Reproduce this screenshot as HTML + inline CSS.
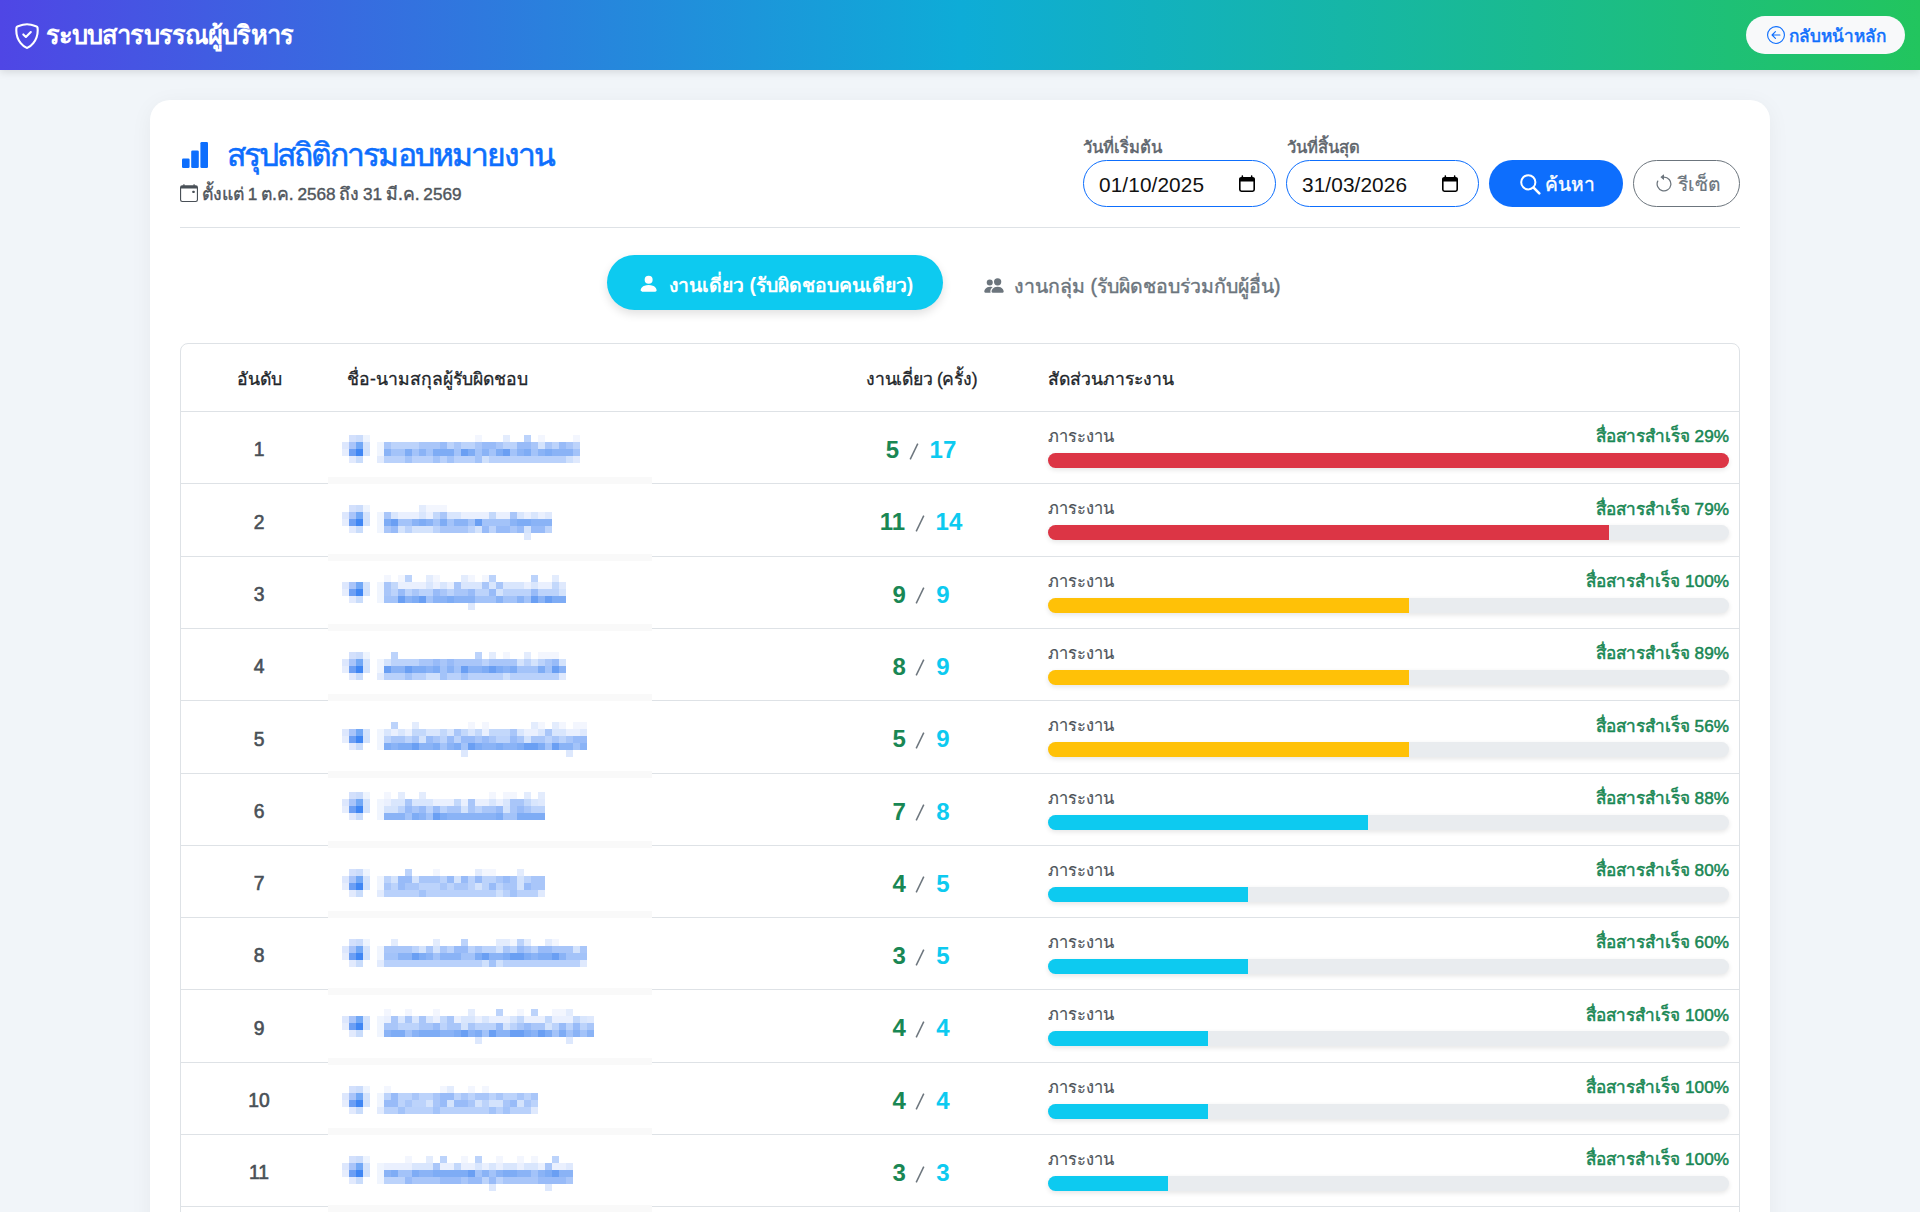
<!DOCTYPE html>
<html lang="th">
<head>
<meta charset="utf-8">
<title>สรุปสถิติการมอบหมายงาน</title>
<style>
*{box-sizing:border-box;margin:0;padding:0}
html,body{width:1920px;height:1212px;overflow:hidden}
body{background:#f1f5f9;font-family:"Liberation Sans",sans-serif;color:#212529;position:relative}
.abs{position:absolute;white-space:nowrap;line-height:1}
.hdr{position:absolute;left:0;top:0;width:1920px;height:70px;background:linear-gradient(90deg,#4f46e5 0%,#0eacd7 50%,#22c55e 100%);box-shadow:0 2px 8px rgba(0,0,0,.12);z-index:2}
.hdr .ttl{left:45.5px;top:23px;letter-spacing:-.85px;font-size:25.5px;font-weight:700;color:#fff}
.back{position:absolute;left:1746px;top:16px;width:159px;height:38px;border-radius:19px;background:#f8f9fa}
.back .t{left:43px;top:11.7px;font-size:17.2px;font-weight:400;color:#0d6efd;-webkit-text-stroke:.55px #0d6efd}
.card{position:absolute;left:150px;top:100px;width:1620px;height:1200px;background:#fff;border-radius:20px;box-shadow:0 4px 22px rgba(15,23,42,.05)}
.title{left:226.5px;top:140px;font-size:31.8px;font-weight:400;color:#0d6efd;letter-spacing:-1.9px;-webkit-text-stroke:0.6px #0d6efd}
.sub{left:202px;top:186px;font-size:17.6px;font-weight:400;color:#50565c;word-spacing:-1.2px;-webkit-text-stroke:.4px #50565c}
.sub .d{font-size:17.2px}
.lbl{top:140px;font-size:16.6px;font-weight:400;color:#5c636a;-webkit-text-stroke:.45px #5c636a}
.inp{position:absolute;top:160px;width:193px;height:47px;border:1px solid #0d6efd;border-radius:24px;background:#fff}
.inp .v{left:15px;top:14px;font-size:20.8px;color:#111;letter-spacing:.1px}
.btn-s{position:absolute;left:1489px;top:160px;width:134px;height:47px;border-radius:24px;background:#0d6efd}
.bs-t{left:1544.5px;top:175px;font-size:19.2px;font-weight:400;color:#fff;-webkit-text-stroke:.35px #fff}
.btn-r{position:absolute;left:1633px;top:160px;width:107px;height:47px;border-radius:24px;border:1px solid #6c757d;background:#fff}
.br-t{left:1678px;top:175px;font-size:19.2px;font-weight:400;color:#6c757d;-webkit-text-stroke:.2px #6c757d}
.sep{position:absolute;left:180px;top:227px;width:1560px;height:1px;background:#dee2e6}
.tab-a{position:absolute;left:607px;top:255px;width:336px;height:55px;border-radius:28px;background:#0dcaf0;box-shadow:0 4px 10px rgba(0,0,0,.12)}
.ta-t{left:669px;top:276px;font-size:19.4px;font-weight:700;color:#fff}
.ti-t{left:1014px;top:277.2px;font-size:19.5px;font-weight:400;color:#6c757d;-webkit-text-stroke:.4px #6c757d}
.tbl{position:absolute;left:180px;top:343px;width:1560px;height:1000px;border:1px solid #dee2e6;border-radius:8px;background:#fff}
.th{top:371px;font-size:17.6px;font-weight:400;color:#212529;-webkit-text-stroke:.3px #212529}
.hl{position:absolute;left:181px;width:1558px;height:1px;background:#dee2e6}
.rk{left:181px;width:156px;text-align:center;font-size:19.3px;font-weight:400;color:#495057;-webkit-text-stroke:.6px #495057}
.cnt{left:806px;width:230px;text-align:center;font-size:24px;font-weight:700}
.cnt .g{color:#198754}.cnt .c{color:#0dcaf0}
.cnt .sl{display:inline-block;margin:0 11px 0 9.5px;position:relative;top:1.5px;vertical-align:baseline}
.pl{left:1048px;font-size:16.4px;color:#4d5359;-webkit-text-stroke:.2px #4d5359}
.pr{right:191px;font-size:17.2px;font-weight:400;color:#198754;-webkit-text-stroke:.5px #198754}
.trk{position:absolute;left:1048px;width:681px;height:15px;border-radius:8px;background:#e9ecef;overflow:hidden;box-shadow:0 2px 5px rgba(0,0,0,.1)}
.fill{height:15px}
</style>
</head>
<body>
<div class="hdr"><svg class="abs" style="left:15px;top:23px" width="24" height="26" viewBox="0 0 24 26" fill="none" stroke="#fff" stroke-width="2.1" stroke-linejoin="round" stroke-linecap="round"><path d="M12 1.3C9 1.3 4.8 2.6 2.4 3.4 1.9 3.6 1.6 4 1.5 4.5 0.6 11.6 3 16.8 5.7 20.2c2 2.6 4.4 4.2 6.3 4.7 1.9-.5 4.3-2.1 6.3-4.7 2.7-3.4 5.1-8.6 4.2-15.7-.1-.5-.4-.9-.9-1.1C19.2 2.6 15 1.3 12 1.3z"/><path d="M8.3 11.4l2.6 2.6 4.9-4.9"/></svg><div class="abs ttl">ระบบสารบรรณผู้บริหาร</div><div class="back"><svg class="abs" style="left:21px;top:10px" width="18" height="18" viewBox="0 0 16 16" fill="#0d6efd"><path fill-rule="evenodd" d="M1 8a7 7 0 1 0 14 0A7 7 0 0 0 1 8m15 0A8 8 0 1 1 0 8a8 8 0 0 1 16 0m-4.5-.5a.5.5 0 0 1 0 1H5.707l2.147 2.146a.5.5 0 0 1-.708.708l-3-3a.5.5 0 0 1 0-.708l3-3a.5.5 0 1 1 .708.708L5.707 7.5z"/></svg><div class="abs t">กลับหน้าหลัก</div></div></div>
<div class="card"></div>
<svg class="abs" style="left:182px;top:142px" width="26" height="26" viewBox="0 0 26 26" fill="#0d6efd"><rect x="0" y="16.5" width="7.6" height="9.5" rx="1.3"/><rect x="9.2" y="8.5" width="7.6" height="17.5" rx="1.3"/><rect x="18.4" y="0" width="7.6" height="26" rx="1.3"/></svg>
<div class="abs title">สรุปสถิติการมอบหมายงาน</div>
<svg class="abs" style="left:180px;top:184px" width="18" height="18" viewBox="0 0 16 16" fill="#495057"><path d="M11 6.5a.5.5 0 0 1 .5-.5h1a.5.5 0 0 1 .5.5v1a.5.5 0 0 1-.5.5h-1a.5.5 0 0 1-.5-.5z"/><path d="M3.5 0a.5.5 0 0 1 .5.5V1h8V.5a.5.5 0 0 1 1 0V1h1a2 2 0 0 1 2 2v11a2 2 0 0 1-2 2H2a2 2 0 0 1-2-2V3a2 2 0 0 1 2-2h1V.5a.5.5 0 0 1 .5-.5M1 4v10a1 1 0 0 0 1 1h12a1 1 0 0 0 1-1V4z"/></svg>
<div class="abs sub">ตั้งแต่ <span class="d">1</span> ต.ค. <span class="d">2568</span> ถึง <span class="d">31</span> มี.ค. <span class="d">2569</span></div>
<div class="abs lbl" style="left:1083px">วันที่เริ่มต้น</div>
<div class="abs lbl" style="left:1287px">วันที่สิ้นสุด</div>
<div class="inp" style="left:1083px"><div class="abs v">01/10/2025</div></div><svg class="abs" style="left:1239px;top:174.5px" width="16" height="18" viewBox="0 0 16 18"><rect x="0.8" y="2.9" width="14.4" height="13.3" rx="1.6" fill="none" stroke="#000" stroke-width="1.6"/><path d="M0 4.6a1.8 1.8 0 0 1 1.8-1.8h12.4a1.8 1.8 0 0 1 1.8 1.8V6.4H0z" fill="#000"/><rect x="2.6" y="0.3" width="1.5" height="3" rx=".6" fill="#000"/><rect x="11.9" y="0.3" width="1.5" height="3" rx=".6" fill="#000"/></svg>
<div class="inp" style="left:1286px"><div class="abs v">31/03/2026</div></div><svg class="abs" style="left:1442px;top:174.5px" width="16" height="18" viewBox="0 0 16 18"><rect x="0.8" y="2.9" width="14.4" height="13.3" rx="1.6" fill="none" stroke="#000" stroke-width="1.6"/><path d="M0 4.6a1.8 1.8 0 0 1 1.8-1.8h12.4a1.8 1.8 0 0 1 1.8 1.8V6.4H0z" fill="#000"/><rect x="2.6" y="0.3" width="1.5" height="3" rx=".6" fill="#000"/><rect x="11.9" y="0.3" width="1.5" height="3" rx=".6" fill="#000"/></svg>
<div class="btn-s"></div><svg class="abs" style="left:1519.5px;top:174px" width="21" height="21" viewBox="0 0 21 21" fill="none" stroke="#fff"><circle cx="8.3" cy="8.3" r="7.1" stroke-width="2"/><path d="M13.6 13.6L19.3 19.3" stroke-width="2.6" stroke-linecap="round"/></svg><div class="abs bs-t">ค้นหา</div>
<div class="btn-r"></div><svg class="abs" style="left:1653.6px;top:174px" width="20" height="20" viewBox="0 0 16 16" fill="#6c757d"><path fill-rule="evenodd" d="M8 3a5 5 0 1 1-4.546 2.914.5.5 0 0 0-.908-.417A6 6 0 1 0 8 2z"/><path d="M8 4.466V.534a.25.25 0 0 0-.41-.192L5.23 2.308a.25.25 0 0 0 0 .384l2.36 1.966A.25.25 0 0 0 8 4.466"/></svg><div class="abs br-t">รีเซ็ต</div>
<div class="sep"></div>
<div class="tab-a"></div><svg class="abs" style="left:638.3px;top:273.3px" width="21.3" height="21.3" viewBox="0 0 16 16" fill="#fff"><path d="M3 14s-1 0-1-1 1-4 6-4 6 3 6 4-1 1-1 1zm5-6a3 3 0 1 0 0-6 3 3 0 0 0 0 6"/></svg><div class="abs ta-t">งานเดี่ยว (รับผิดชอบคนเดียว)</div>
<svg class="abs" style="left:984px;top:277px" width="20" height="17" viewBox="0 0 16 14" fill="#6c757d"><path d="M7 13s-1 0-1-1 1-4 5-4 5 3 5 4-1 1-1 1zm4-6a3 3 0 1 0 0-6 3 3 0 0 0 0 6m-5.784 6A2.24 2.24 0 0 1 5 12c0-1.355.68-2.75 1.936-3.72A6.3 6.3 0 0 0 5 8c-4 0-5 3-5 4s1 1 1 1zM4.5 7a2.5 2.5 0 1 0 0-5 2.5 2.5 0 0 0 0 5"/></svg><div class="abs ti-t">งานกลุ่ม (รับผิดชอบร่วมกับผู้อื่น)</div>
<div class="tbl"></div>
<div class="abs th" style="left:237px">อันดับ</div>
<div class="abs th" style="left:347px">ชื่อ-นามสกุลผู้รับผิดชอบ</div>
<div class="abs th" style="left:866px;letter-spacing:-.25px">งานเดี่ยว (ครั้ง)</div>
<div class="abs th" style="left:1048px">สัดส่วนภาระงาน</div>
<div class="hl" style="top:411px"></div>
<div class="hl" style="top:483.3px"></div>
<div class="abs rk" style="top:440.3px">1</div>
<div class="abs cnt" style="top:438px"><span class="g">5</span><svg class="sl" width="10" height="17" viewBox="0 0 10 17"><path d="M1.2 16.3L8.8 0.7" stroke="#6c757d" stroke-width="1.5"/></svg><span class="c">17</span></div>
<div class="abs pl" style="top:428px">ภาระงาน</div>
<div class="abs pr" style="top:428.3px">สื่อสารสำเร็จ <span class="d">29%</span></div>
<div class="trk" style="top:453px"><div class="fill" style="width:681px;background:#dc3545"></div></div>
<div class="hl" style="top:555.6px"></div>
<div class="abs rk" style="top:512.6px">2</div>
<div class="abs cnt" style="top:510.3px"><span class="g">11</span><svg class="sl" width="10" height="17" viewBox="0 0 10 17"><path d="M1.2 16.3L8.8 0.7" stroke="#6c757d" stroke-width="1.5"/></svg><span class="c">14</span></div>
<div class="abs pl" style="top:500.3px">ภาระงาน</div>
<div class="abs pr" style="top:500.6px">สื่อสารสำเร็จ <span class="d">79%</span></div>
<div class="trk" style="top:525.3px"><div class="fill" style="width:560.82px;background:#dc3545"></div></div>
<div class="hl" style="top:627.9px"></div>
<div class="abs rk" style="top:584.9px">3</div>
<div class="abs cnt" style="top:582.6px"><span class="g">9</span><svg class="sl" width="10" height="17" viewBox="0 0 10 17"><path d="M1.2 16.3L8.8 0.7" stroke="#6c757d" stroke-width="1.5"/></svg><span class="c">9</span></div>
<div class="abs pl" style="top:572.6px">ภาระงาน</div>
<div class="abs pr" style="top:572.9px">สื่อสารสำเร็จ <span class="d">100%</span></div>
<div class="trk" style="top:597.6px"><div class="fill" style="width:360.53px;background:#ffc107"></div></div>
<div class="hl" style="top:700.2px"></div>
<div class="abs rk" style="top:657.2px">4</div>
<div class="abs cnt" style="top:654.9px"><span class="g">8</span><svg class="sl" width="10" height="17" viewBox="0 0 10 17"><path d="M1.2 16.3L8.8 0.7" stroke="#6c757d" stroke-width="1.5"/></svg><span class="c">9</span></div>
<div class="abs pl" style="top:644.9px">ภาระงาน</div>
<div class="abs pr" style="top:645.2px">สื่อสารสำเร็จ <span class="d">89%</span></div>
<div class="trk" style="top:669.9px"><div class="fill" style="width:360.53px;background:#ffc107"></div></div>
<div class="hl" style="top:772.5px"></div>
<div class="abs rk" style="top:729.5px">5</div>
<div class="abs cnt" style="top:727.2px"><span class="g">5</span><svg class="sl" width="10" height="17" viewBox="0 0 10 17"><path d="M1.2 16.3L8.8 0.7" stroke="#6c757d" stroke-width="1.5"/></svg><span class="c">9</span></div>
<div class="abs pl" style="top:717.2px">ภาระงาน</div>
<div class="abs pr" style="top:717.5px">สื่อสารสำเร็จ <span class="d">56%</span></div>
<div class="trk" style="top:742.2px"><div class="fill" style="width:360.53px;background:#ffc107"></div></div>
<div class="hl" style="top:844.8px"></div>
<div class="abs rk" style="top:801.8px">6</div>
<div class="abs cnt" style="top:799.5px"><span class="g">7</span><svg class="sl" width="10" height="17" viewBox="0 0 10 17"><path d="M1.2 16.3L8.8 0.7" stroke="#6c757d" stroke-width="1.5"/></svg><span class="c">8</span></div>
<div class="abs pl" style="top:789.5px">ภาระงาน</div>
<div class="abs pr" style="top:789.8px">สื่อสารสำเร็จ <span class="d">88%</span></div>
<div class="trk" style="top:814.5px"><div class="fill" style="width:320.47px;background:#0dcaf0"></div></div>
<div class="hl" style="top:917.1px"></div>
<div class="abs rk" style="top:874.1px">7</div>
<div class="abs cnt" style="top:871.8px"><span class="g">4</span><svg class="sl" width="10" height="17" viewBox="0 0 10 17"><path d="M1.2 16.3L8.8 0.7" stroke="#6c757d" stroke-width="1.5"/></svg><span class="c">5</span></div>
<div class="abs pl" style="top:861.8px">ภาระงาน</div>
<div class="abs pr" style="top:862.1px">สื่อสารสำเร็จ <span class="d">80%</span></div>
<div class="trk" style="top:886.8px"><div class="fill" style="width:200.29px;background:#0dcaf0"></div></div>
<div class="hl" style="top:989.4px"></div>
<div class="abs rk" style="top:946.4px">8</div>
<div class="abs cnt" style="top:944.1px"><span class="g">3</span><svg class="sl" width="10" height="17" viewBox="0 0 10 17"><path d="M1.2 16.3L8.8 0.7" stroke="#6c757d" stroke-width="1.5"/></svg><span class="c">5</span></div>
<div class="abs pl" style="top:934.1px">ภาระงาน</div>
<div class="abs pr" style="top:934.4px">สื่อสารสำเร็จ <span class="d">60%</span></div>
<div class="trk" style="top:959.1px"><div class="fill" style="width:200.29px;background:#0dcaf0"></div></div>
<div class="hl" style="top:1061.7px"></div>
<div class="abs rk" style="top:1018.7px">9</div>
<div class="abs cnt" style="top:1016.4px"><span class="g">4</span><svg class="sl" width="10" height="17" viewBox="0 0 10 17"><path d="M1.2 16.3L8.8 0.7" stroke="#6c757d" stroke-width="1.5"/></svg><span class="c">4</span></div>
<div class="abs pl" style="top:1006.4px">ภาระงาน</div>
<div class="abs pr" style="top:1006.7px">สื่อสารสำเร็จ <span class="d">100%</span></div>
<div class="trk" style="top:1031.4px"><div class="fill" style="width:160.24px;background:#0dcaf0"></div></div>
<div class="hl" style="top:1134px"></div>
<div class="abs rk" style="top:1091px">10</div>
<div class="abs cnt" style="top:1088.7px"><span class="g">4</span><svg class="sl" width="10" height="17" viewBox="0 0 10 17"><path d="M1.2 16.3L8.8 0.7" stroke="#6c757d" stroke-width="1.5"/></svg><span class="c">4</span></div>
<div class="abs pl" style="top:1078.7px">ภาระงาน</div>
<div class="abs pr" style="top:1079px">สื่อสารสำเร็จ <span class="d">100%</span></div>
<div class="trk" style="top:1103.7px"><div class="fill" style="width:160.24px;background:#0dcaf0"></div></div>
<div class="hl" style="top:1206.3px"></div>
<div class="abs rk" style="top:1163.3px">11</div>
<div class="abs cnt" style="top:1161px"><span class="g">3</span><svg class="sl" width="10" height="17" viewBox="0 0 10 17"><path d="M1.2 16.3L8.8 0.7" stroke="#6c757d" stroke-width="1.5"/></svg><span class="c">3</span></div>
<div class="abs pl" style="top:1151px">ภาระงาน</div>
<div class="abs pr" style="top:1151.3px">สื่อสารสำเร็จ <span class="d">100%</span></div>
<div class="trk" style="top:1176px"><div class="fill" style="width:120.18px;background:#0dcaf0"></div></div>
<div class="hl" style="top:1278.6px"></div>
<div class="abs rk" style="top:1235.6px">12</div>
<div class="abs cnt" style="top:1233.3px"><span class="g">3</span><svg class="sl" width="10" height="17" viewBox="0 0 10 17"><path d="M1.2 16.3L8.8 0.7" stroke="#6c757d" stroke-width="1.5"/></svg><span class="c">3</span></div>
<div class="abs pl" style="top:1223.3px">ภาระงาน</div>
<div class="abs pr" style="top:1223.6px">สื่อสารสำเร็จ <span class="d">100%</span></div>
<div class="trk" style="top:1248.3px"><div class="fill" style="width:120.18px;background:#0dcaf0"></div></div>
<svg class="abs" style="left:0;top:0" width="1920" height="1212"><rect x="328" y="477" width="324" height="7" fill="#f9f9f9"/><rect x="349" y="435" width="7" height="7" fill="#d3e0fc"/><rect x="356" y="435" width="7" height="7" fill="#cbdcfb"/><rect x="363" y="435" width="7" height="7" fill="#eef4fe"/><rect x="342" y="442" width="7" height="7" fill="#dde7fd"/><rect x="349" y="442" width="7" height="7" fill="#a9c4f9"/><rect x="356" y="442" width="7" height="7" fill="#72a8f6"/><rect x="363" y="442" width="7" height="7" fill="#d4e3fc"/><rect x="342" y="449" width="7" height="7" fill="#e6edfd"/><rect x="349" y="449" width="7" height="7" fill="#6d9ff4"/><rect x="356" y="449" width="7" height="7" fill="#3f86f4"/><rect x="363" y="449" width="7" height="7" fill="#d2e2fc"/><rect x="349" y="456" width="7" height="7" fill="#e2eafd"/><rect x="356" y="456" width="7" height="7" fill="#c9dcfb"/><rect x="475" y="435" width="7" height="7" fill="#f3f6fe"/><rect x="503" y="435" width="7" height="7" fill="#e3ecfd"/><rect x="524" y="435" width="7" height="7" fill="#bcd3fb"/><rect x="538" y="435" width="7" height="7" fill="#f3f6fe"/><rect x="573" y="435" width="7" height="7" fill="#f3f6fe"/><rect x="377" y="442" width="7" height="7" fill="#f0f5fe"/><rect x="384" y="442" width="7" height="7" fill="#a9c6f9"/><rect x="391" y="442" width="7" height="7" fill="#bcd3fb"/><rect x="398" y="442" width="7" height="7" fill="#bcd3fb"/><rect x="405" y="442" width="7" height="7" fill="#bcd3fb"/><rect x="412" y="442" width="7" height="7" fill="#bcd3fb"/><rect x="419" y="442" width="7" height="7" fill="#a9c6f9"/><rect x="426" y="442" width="7" height="7" fill="#a9c6f9"/><rect x="433" y="442" width="7" height="7" fill="#a9c6f9"/><rect x="440" y="442" width="7" height="7" fill="#98bbf8"/><rect x="447" y="442" width="7" height="7" fill="#bcd3fb"/><rect x="454" y="442" width="7" height="7" fill="#a9c6f9"/><rect x="461" y="442" width="7" height="7" fill="#bcd3fb"/><rect x="468" y="442" width="7" height="7" fill="#bcd3fb"/><rect x="475" y="442" width="7" height="7" fill="#a9c6f9"/><rect x="482" y="442" width="7" height="7" fill="#98bbf8"/><rect x="489" y="442" width="7" height="7" fill="#98bbf8"/><rect x="496" y="442" width="7" height="7" fill="#a9c6f9"/><rect x="503" y="442" width="7" height="7" fill="#bcd3fb"/><rect x="510" y="442" width="7" height="7" fill="#bcd3fb"/><rect x="517" y="442" width="7" height="7" fill="#98bbf8"/><rect x="524" y="442" width="7" height="7" fill="#98bbf8"/><rect x="531" y="442" width="7" height="7" fill="#a9c6f9"/><rect x="538" y="442" width="7" height="7" fill="#d4e3fc"/><rect x="545" y="442" width="7" height="7" fill="#a9c6f9"/><rect x="552" y="442" width="7" height="7" fill="#bcd3fb"/><rect x="559" y="442" width="7" height="7" fill="#98bbf8"/><rect x="566" y="442" width="7" height="7" fill="#a9c6f9"/><rect x="573" y="442" width="7" height="7" fill="#bcd3fb"/><rect x="377" y="449" width="7" height="7" fill="#f0f5fe"/><rect x="384" y="449" width="7" height="7" fill="#8ab3f6"/><rect x="391" y="449" width="7" height="7" fill="#a3c3f9"/><rect x="398" y="449" width="7" height="7" fill="#a3c3f9"/><rect x="405" y="449" width="7" height="7" fill="#7eacf5"/><rect x="412" y="449" width="7" height="7" fill="#a3c3f9"/><rect x="419" y="449" width="7" height="7" fill="#8ab3f6"/><rect x="426" y="449" width="7" height="7" fill="#a3c3f9"/><rect x="433" y="449" width="7" height="7" fill="#7eacf5"/><rect x="440" y="449" width="7" height="7" fill="#7eacf5"/><rect x="447" y="449" width="7" height="7" fill="#7eacf5"/><rect x="454" y="449" width="7" height="7" fill="#a3c3f9"/><rect x="461" y="449" width="7" height="7" fill="#6a9ff3"/><rect x="468" y="449" width="7" height="7" fill="#7eacf5"/><rect x="475" y="449" width="7" height="7" fill="#a3c3f9"/><rect x="482" y="449" width="7" height="7" fill="#8ab3f6"/><rect x="489" y="449" width="7" height="7" fill="#a3c3f9"/><rect x="496" y="449" width="7" height="7" fill="#7eacf5"/><rect x="503" y="449" width="7" height="7" fill="#6a9ff3"/><rect x="510" y="449" width="7" height="7" fill="#a3c3f9"/><rect x="517" y="449" width="7" height="7" fill="#8ab3f6"/><rect x="524" y="449" width="7" height="7" fill="#7eacf5"/><rect x="531" y="449" width="7" height="7" fill="#a3c3f9"/><rect x="538" y="449" width="7" height="7" fill="#8ab3f6"/><rect x="545" y="449" width="7" height="7" fill="#7eacf5"/><rect x="552" y="449" width="7" height="7" fill="#8ab3f6"/><rect x="559" y="449" width="7" height="7" fill="#8ab3f6"/><rect x="566" y="449" width="7" height="7" fill="#8ab3f6"/><rect x="573" y="449" width="7" height="7" fill="#a3c3f9"/><rect x="377" y="456" width="7" height="7" fill="#e2ebfd"/><rect x="384" y="456" width="7" height="7" fill="#b9d1fb"/><rect x="391" y="456" width="7" height="7" fill="#b9d1fb"/><rect x="398" y="456" width="7" height="7" fill="#b9d1fb"/><rect x="405" y="456" width="7" height="7" fill="#a3c3f9"/><rect x="412" y="456" width="7" height="7" fill="#b9d1fb"/><rect x="419" y="456" width="7" height="7" fill="#b9d1fb"/><rect x="426" y="456" width="7" height="7" fill="#b9d1fb"/><rect x="433" y="456" width="7" height="7" fill="#a3c3f9"/><rect x="440" y="456" width="7" height="7" fill="#b9d1fb"/><rect x="447" y="456" width="7" height="7" fill="#a3c3f9"/><rect x="454" y="456" width="7" height="7" fill="#b9d1fb"/><rect x="461" y="456" width="7" height="7" fill="#b9d1fb"/><rect x="468" y="456" width="7" height="7" fill="#b9d1fb"/><rect x="475" y="456" width="7" height="7" fill="#a3c3f9"/><rect x="482" y="456" width="7" height="7" fill="#cfe0fc"/><rect x="489" y="456" width="7" height="7" fill="#b9d1fb"/><rect x="496" y="456" width="7" height="7" fill="#b9d1fb"/><rect x="503" y="456" width="7" height="7" fill="#b9d1fb"/><rect x="510" y="456" width="7" height="7" fill="#b9d1fb"/><rect x="517" y="456" width="7" height="7" fill="#b9d1fb"/><rect x="524" y="456" width="7" height="7" fill="#b9d1fb"/><rect x="531" y="456" width="7" height="7" fill="#b9d1fb"/><rect x="538" y="456" width="7" height="7" fill="#b9d1fb"/><rect x="545" y="456" width="7" height="7" fill="#b9d1fb"/><rect x="552" y="456" width="7" height="7" fill="#b9d1fb"/><rect x="559" y="456" width="7" height="7" fill="#b9d1fb"/><rect x="566" y="456" width="7" height="7" fill="#cfe0fc"/><rect x="573" y="456" width="7" height="7" fill="#dfe9fd"/><rect x="328" y="554" width="324" height="7" fill="#f9f9f9"/><rect x="349" y="505" width="7" height="7" fill="#d3e0fc"/><rect x="356" y="505" width="7" height="7" fill="#cbdcfb"/><rect x="363" y="505" width="7" height="7" fill="#eef4fe"/><rect x="342" y="512" width="7" height="7" fill="#dde7fd"/><rect x="349" y="512" width="7" height="7" fill="#a9c4f9"/><rect x="356" y="512" width="7" height="7" fill="#72a8f6"/><rect x="363" y="512" width="7" height="7" fill="#d4e3fc"/><rect x="342" y="519" width="7" height="7" fill="#e6edfd"/><rect x="349" y="519" width="7" height="7" fill="#6d9ff4"/><rect x="356" y="519" width="7" height="7" fill="#3f86f4"/><rect x="363" y="519" width="7" height="7" fill="#d2e2fc"/><rect x="349" y="526" width="7" height="7" fill="#e2eafd"/><rect x="356" y="526" width="7" height="7" fill="#c9dcfb"/><rect x="419" y="505" width="7" height="7" fill="#e3ecfd"/><rect x="426" y="505" width="7" height="7" fill="#f3f6fe"/><rect x="433" y="505" width="7" height="7" fill="#f3f6fe"/><rect x="440" y="505" width="7" height="7" fill="#f3f6fe"/><rect x="377" y="512" width="7" height="7" fill="#f0f5fe"/><rect x="384" y="512" width="7" height="7" fill="#a9c6f9"/><rect x="391" y="512" width="7" height="7" fill="#d9e6fd"/><rect x="398" y="512" width="7" height="7" fill="#eaf0fe"/><rect x="405" y="512" width="7" height="7" fill="#eaf0fe"/><rect x="412" y="512" width="7" height="7" fill="#eaf0fe"/><rect x="419" y="512" width="7" height="7" fill="#d9e6fd"/><rect x="426" y="512" width="7" height="7" fill="#eaf0fe"/><rect x="433" y="512" width="7" height="7" fill="#c3d8fb"/><rect x="440" y="512" width="7" height="7" fill="#a9c6f9"/><rect x="447" y="512" width="7" height="7" fill="#d9e6fd"/><rect x="454" y="512" width="7" height="7" fill="#d9e6fd"/><rect x="461" y="512" width="7" height="7" fill="#eaf0fe"/><rect x="468" y="512" width="7" height="7" fill="#eaf0fe"/><rect x="475" y="512" width="7" height="7" fill="#eaf0fe"/><rect x="482" y="512" width="7" height="7" fill="#eaf0fe"/><rect x="489" y="512" width="7" height="7" fill="#c3d8fb"/><rect x="496" y="512" width="7" height="7" fill="#eaf0fe"/><rect x="503" y="512" width="7" height="7" fill="#eaf0fe"/><rect x="510" y="512" width="7" height="7" fill="#a9c6f9"/><rect x="517" y="512" width="7" height="7" fill="#d9e6fd"/><rect x="524" y="512" width="7" height="7" fill="#eaf0fe"/><rect x="531" y="512" width="7" height="7" fill="#d9e6fd"/><rect x="538" y="512" width="7" height="7" fill="#eaf0fe"/><rect x="545" y="512" width="7" height="7" fill="#dfe9fd"/><rect x="377" y="519" width="7" height="7" fill="#f0f5fe"/><rect x="384" y="519" width="7" height="7" fill="#7eacf5"/><rect x="391" y="519" width="7" height="7" fill="#6a9ff3"/><rect x="398" y="519" width="7" height="7" fill="#a3c3f9"/><rect x="405" y="519" width="7" height="7" fill="#a3c3f9"/><rect x="412" y="519" width="7" height="7" fill="#8ab3f6"/><rect x="419" y="519" width="7" height="7" fill="#7eacf5"/><rect x="426" y="519" width="7" height="7" fill="#8ab3f6"/><rect x="433" y="519" width="7" height="7" fill="#a3c3f9"/><rect x="440" y="519" width="7" height="7" fill="#7eacf5"/><rect x="447" y="519" width="7" height="7" fill="#a3c3f9"/><rect x="454" y="519" width="7" height="7" fill="#8ab3f6"/><rect x="461" y="519" width="7" height="7" fill="#8ab3f6"/><rect x="468" y="519" width="7" height="7" fill="#a3c3f9"/><rect x="475" y="519" width="7" height="7" fill="#6a9ff3"/><rect x="482" y="519" width="7" height="7" fill="#a3c3f9"/><rect x="489" y="519" width="7" height="7" fill="#a3c3f9"/><rect x="496" y="519" width="7" height="7" fill="#a3c3f9"/><rect x="503" y="519" width="7" height="7" fill="#a3c3f9"/><rect x="510" y="519" width="7" height="7" fill="#8ab3f6"/><rect x="517" y="519" width="7" height="7" fill="#7eacf5"/><rect x="524" y="519" width="7" height="7" fill="#7eacf5"/><rect x="531" y="519" width="7" height="7" fill="#8ab3f6"/><rect x="538" y="519" width="7" height="7" fill="#8ab3f6"/><rect x="545" y="519" width="7" height="7" fill="#8ab3f6"/><rect x="377" y="526" width="7" height="7" fill="#f0f5fe"/><rect x="384" y="526" width="7" height="7" fill="#a9c6f9"/><rect x="391" y="526" width="7" height="7" fill="#98bbf8"/><rect x="398" y="526" width="7" height="7" fill="#d4e3fc"/><rect x="405" y="526" width="7" height="7" fill="#bcd3fb"/><rect x="412" y="526" width="7" height="7" fill="#d4e3fc"/><rect x="419" y="526" width="7" height="7" fill="#d4e3fc"/><rect x="426" y="526" width="7" height="7" fill="#d4e3fc"/><rect x="433" y="526" width="7" height="7" fill="#bcd3fb"/><rect x="440" y="526" width="7" height="7" fill="#a9c6f9"/><rect x="447" y="526" width="7" height="7" fill="#a9c6f9"/><rect x="454" y="526" width="7" height="7" fill="#a9c6f9"/><rect x="461" y="526" width="7" height="7" fill="#a9c6f9"/><rect x="468" y="526" width="7" height="7" fill="#bcd3fb"/><rect x="475" y="526" width="7" height="7" fill="#d4e3fc"/><rect x="482" y="526" width="7" height="7" fill="#98bbf8"/><rect x="489" y="526" width="7" height="7" fill="#bcd3fb"/><rect x="496" y="526" width="7" height="7" fill="#98bbf8"/><rect x="503" y="526" width="7" height="7" fill="#98bbf8"/><rect x="510" y="526" width="7" height="7" fill="#a9c6f9"/><rect x="517" y="526" width="7" height="7" fill="#98bbf8"/><rect x="524" y="526" width="7" height="7" fill="#d4e3fc"/><rect x="531" y="526" width="7" height="7" fill="#98bbf8"/><rect x="538" y="526" width="7" height="7" fill="#98bbf8"/><rect x="545" y="526" width="7" height="7" fill="#bcd3fb"/><rect x="524" y="533" width="7" height="7" fill="#dde8fd"/><rect x="328" y="624" width="324" height="7" fill="#f9f9f9"/><rect x="342" y="582" width="7" height="7" fill="#dde7fd"/><rect x="349" y="582" width="7" height="7" fill="#a9c4f9"/><rect x="356" y="582" width="7" height="7" fill="#72a8f6"/><rect x="363" y="582" width="7" height="7" fill="#d4e3fc"/><rect x="342" y="589" width="7" height="7" fill="#e6edfd"/><rect x="349" y="589" width="7" height="7" fill="#6d9ff4"/><rect x="356" y="589" width="7" height="7" fill="#3f86f4"/><rect x="363" y="589" width="7" height="7" fill="#d2e2fc"/><rect x="349" y="596" width="7" height="7" fill="#e2eafd"/><rect x="356" y="596" width="7" height="7" fill="#c9dcfb"/><rect x="384" y="575" width="7" height="7" fill="#f3f6fe"/><rect x="398" y="575" width="7" height="7" fill="#f3f6fe"/><rect x="405" y="575" width="7" height="7" fill="#bcd3fb"/><rect x="426" y="575" width="7" height="7" fill="#e3ecfd"/><rect x="433" y="575" width="7" height="7" fill="#f3f6fe"/><rect x="461" y="575" width="7" height="7" fill="#e3ecfd"/><rect x="468" y="575" width="7" height="7" fill="#f3f6fe"/><rect x="482" y="575" width="7" height="7" fill="#f3f6fe"/><rect x="489" y="575" width="7" height="7" fill="#bcd3fb"/><rect x="531" y="575" width="7" height="7" fill="#bcd3fb"/><rect x="552" y="575" width="7" height="7" fill="#e3ecfd"/><rect x="377" y="582" width="7" height="7" fill="#f0f5fe"/><rect x="384" y="582" width="7" height="7" fill="#a9c6f9"/><rect x="391" y="582" width="7" height="7" fill="#c3d8fb"/><rect x="398" y="582" width="7" height="7" fill="#eaf0fe"/><rect x="405" y="582" width="7" height="7" fill="#eaf0fe"/><rect x="412" y="582" width="7" height="7" fill="#eaf0fe"/><rect x="419" y="582" width="7" height="7" fill="#eaf0fe"/><rect x="426" y="582" width="7" height="7" fill="#d9e6fd"/><rect x="433" y="582" width="7" height="7" fill="#eaf0fe"/><rect x="440" y="582" width="7" height="7" fill="#d9e6fd"/><rect x="447" y="582" width="7" height="7" fill="#eaf0fe"/><rect x="454" y="582" width="7" height="7" fill="#a9c6f9"/><rect x="461" y="582" width="7" height="7" fill="#d9e6fd"/><rect x="468" y="582" width="7" height="7" fill="#d9e6fd"/><rect x="475" y="582" width="7" height="7" fill="#d9e6fd"/><rect x="482" y="582" width="7" height="7" fill="#a9c6f9"/><rect x="489" y="582" width="7" height="7" fill="#d9e6fd"/><rect x="496" y="582" width="7" height="7" fill="#a9c6f9"/><rect x="503" y="582" width="7" height="7" fill="#d9e6fd"/><rect x="510" y="582" width="7" height="7" fill="#d9e6fd"/><rect x="517" y="582" width="7" height="7" fill="#d9e6fd"/><rect x="524" y="582" width="7" height="7" fill="#eaf0fe"/><rect x="531" y="582" width="7" height="7" fill="#d9e6fd"/><rect x="538" y="582" width="7" height="7" fill="#eaf0fe"/><rect x="545" y="582" width="7" height="7" fill="#eaf0fe"/><rect x="552" y="582" width="7" height="7" fill="#c3d8fb"/><rect x="559" y="582" width="7" height="7" fill="#dfe9fd"/><rect x="377" y="589" width="7" height="7" fill="#f0f5fe"/><rect x="384" y="589" width="7" height="7" fill="#a9c6f9"/><rect x="391" y="589" width="7" height="7" fill="#bcd3fb"/><rect x="398" y="589" width="7" height="7" fill="#98bbf8"/><rect x="405" y="589" width="7" height="7" fill="#bcd3fb"/><rect x="412" y="589" width="7" height="7" fill="#a9c6f9"/><rect x="419" y="589" width="7" height="7" fill="#bcd3fb"/><rect x="426" y="589" width="7" height="7" fill="#bcd3fb"/><rect x="433" y="589" width="7" height="7" fill="#98bbf8"/><rect x="440" y="589" width="7" height="7" fill="#a9c6f9"/><rect x="447" y="589" width="7" height="7" fill="#bcd3fb"/><rect x="454" y="589" width="7" height="7" fill="#a9c6f9"/><rect x="461" y="589" width="7" height="7" fill="#a9c6f9"/><rect x="468" y="589" width="7" height="7" fill="#98bbf8"/><rect x="475" y="589" width="7" height="7" fill="#bcd3fb"/><rect x="482" y="589" width="7" height="7" fill="#bcd3fb"/><rect x="489" y="589" width="7" height="7" fill="#98bbf8"/><rect x="496" y="589" width="7" height="7" fill="#d4e3fc"/><rect x="503" y="589" width="7" height="7" fill="#bcd3fb"/><rect x="510" y="589" width="7" height="7" fill="#bcd3fb"/><rect x="517" y="589" width="7" height="7" fill="#bcd3fb"/><rect x="524" y="589" width="7" height="7" fill="#bcd3fb"/><rect x="531" y="589" width="7" height="7" fill="#98bbf8"/><rect x="538" y="589" width="7" height="7" fill="#bcd3fb"/><rect x="545" y="589" width="7" height="7" fill="#bcd3fb"/><rect x="552" y="589" width="7" height="7" fill="#bcd3fb"/><rect x="559" y="589" width="7" height="7" fill="#d4e3fc"/><rect x="377" y="596" width="7" height="7" fill="#f0f5fe"/><rect x="384" y="596" width="7" height="7" fill="#a3c3f9"/><rect x="391" y="596" width="7" height="7" fill="#a3c3f9"/><rect x="398" y="596" width="7" height="7" fill="#6a9ff3"/><rect x="405" y="596" width="7" height="7" fill="#8ab3f6"/><rect x="412" y="596" width="7" height="7" fill="#7eacf5"/><rect x="419" y="596" width="7" height="7" fill="#6a9ff3"/><rect x="426" y="596" width="7" height="7" fill="#a3c3f9"/><rect x="433" y="596" width="7" height="7" fill="#8ab3f6"/><rect x="440" y="596" width="7" height="7" fill="#8ab3f6"/><rect x="447" y="596" width="7" height="7" fill="#7eacf5"/><rect x="454" y="596" width="7" height="7" fill="#8ab3f6"/><rect x="461" y="596" width="7" height="7" fill="#8ab3f6"/><rect x="468" y="596" width="7" height="7" fill="#8ab3f6"/><rect x="475" y="596" width="7" height="7" fill="#a3c3f9"/><rect x="482" y="596" width="7" height="7" fill="#a3c3f9"/><rect x="489" y="596" width="7" height="7" fill="#a3c3f9"/><rect x="496" y="596" width="7" height="7" fill="#8ab3f6"/><rect x="503" y="596" width="7" height="7" fill="#a3c3f9"/><rect x="510" y="596" width="7" height="7" fill="#a3c3f9"/><rect x="517" y="596" width="7" height="7" fill="#8ab3f6"/><rect x="524" y="596" width="7" height="7" fill="#a3c3f9"/><rect x="531" y="596" width="7" height="7" fill="#6a9ff3"/><rect x="538" y="596" width="7" height="7" fill="#8ab3f6"/><rect x="545" y="596" width="7" height="7" fill="#6a9ff3"/><rect x="552" y="596" width="7" height="7" fill="#7eacf5"/><rect x="559" y="596" width="7" height="7" fill="#7eacf5"/><rect x="468" y="603" width="7" height="7" fill="#dde8fd"/><rect x="328" y="694" width="324" height="7" fill="#f9f9f9"/><rect x="349" y="652" width="7" height="7" fill="#d3e0fc"/><rect x="356" y="652" width="7" height="7" fill="#cbdcfb"/><rect x="363" y="652" width="7" height="7" fill="#eef4fe"/><rect x="342" y="659" width="7" height="7" fill="#dde7fd"/><rect x="349" y="659" width="7" height="7" fill="#a9c4f9"/><rect x="356" y="659" width="7" height="7" fill="#72a8f6"/><rect x="363" y="659" width="7" height="7" fill="#d4e3fc"/><rect x="342" y="666" width="7" height="7" fill="#e6edfd"/><rect x="349" y="666" width="7" height="7" fill="#6d9ff4"/><rect x="356" y="666" width="7" height="7" fill="#3f86f4"/><rect x="363" y="666" width="7" height="7" fill="#d2e2fc"/><rect x="349" y="673" width="7" height="7" fill="#e2eafd"/><rect x="356" y="673" width="7" height="7" fill="#c9dcfb"/><rect x="391" y="652" width="7" height="7" fill="#bcd3fb"/><rect x="475" y="652" width="7" height="7" fill="#bcd3fb"/><rect x="489" y="652" width="7" height="7" fill="#e3ecfd"/><rect x="503" y="652" width="7" height="7" fill="#f3f6fe"/><rect x="524" y="652" width="7" height="7" fill="#e3ecfd"/><rect x="538" y="652" width="7" height="7" fill="#f3f6fe"/><rect x="545" y="652" width="7" height="7" fill="#f3f6fe"/><rect x="552" y="652" width="7" height="7" fill="#f3f6fe"/><rect x="377" y="659" width="7" height="7" fill="#f0f5fe"/><rect x="384" y="659" width="7" height="7" fill="#d4e3fc"/><rect x="391" y="659" width="7" height="7" fill="#bcd3fb"/><rect x="398" y="659" width="7" height="7" fill="#bcd3fb"/><rect x="405" y="659" width="7" height="7" fill="#bcd3fb"/><rect x="412" y="659" width="7" height="7" fill="#bcd3fb"/><rect x="419" y="659" width="7" height="7" fill="#a9c6f9"/><rect x="426" y="659" width="7" height="7" fill="#a9c6f9"/><rect x="433" y="659" width="7" height="7" fill="#98bbf8"/><rect x="440" y="659" width="7" height="7" fill="#a9c6f9"/><rect x="447" y="659" width="7" height="7" fill="#98bbf8"/><rect x="454" y="659" width="7" height="7" fill="#a9c6f9"/><rect x="461" y="659" width="7" height="7" fill="#a9c6f9"/><rect x="468" y="659" width="7" height="7" fill="#a9c6f9"/><rect x="475" y="659" width="7" height="7" fill="#a9c6f9"/><rect x="482" y="659" width="7" height="7" fill="#bcd3fb"/><rect x="489" y="659" width="7" height="7" fill="#a9c6f9"/><rect x="496" y="659" width="7" height="7" fill="#a9c6f9"/><rect x="503" y="659" width="7" height="7" fill="#a9c6f9"/><rect x="510" y="659" width="7" height="7" fill="#a9c6f9"/><rect x="517" y="659" width="7" height="7" fill="#d4e3fc"/><rect x="524" y="659" width="7" height="7" fill="#bcd3fb"/><rect x="531" y="659" width="7" height="7" fill="#d4e3fc"/><rect x="538" y="659" width="7" height="7" fill="#bcd3fb"/><rect x="545" y="659" width="7" height="7" fill="#a9c6f9"/><rect x="552" y="659" width="7" height="7" fill="#98bbf8"/><rect x="559" y="659" width="7" height="7" fill="#d4e3fc"/><rect x="377" y="666" width="7" height="7" fill="#f0f5fe"/><rect x="384" y="666" width="7" height="7" fill="#6a9ff3"/><rect x="391" y="666" width="7" height="7" fill="#8ab3f6"/><rect x="398" y="666" width="7" height="7" fill="#8ab3f6"/><rect x="405" y="666" width="7" height="7" fill="#6a9ff3"/><rect x="412" y="666" width="7" height="7" fill="#7eacf5"/><rect x="419" y="666" width="7" height="7" fill="#7eacf5"/><rect x="426" y="666" width="7" height="7" fill="#8ab3f6"/><rect x="433" y="666" width="7" height="7" fill="#7eacf5"/><rect x="440" y="666" width="7" height="7" fill="#a3c3f9"/><rect x="447" y="666" width="7" height="7" fill="#8ab3f6"/><rect x="454" y="666" width="7" height="7" fill="#a3c3f9"/><rect x="461" y="666" width="7" height="7" fill="#6a9ff3"/><rect x="468" y="666" width="7" height="7" fill="#8ab3f6"/><rect x="475" y="666" width="7" height="7" fill="#8ab3f6"/><rect x="482" y="666" width="7" height="7" fill="#7eacf5"/><rect x="489" y="666" width="7" height="7" fill="#6a9ff3"/><rect x="496" y="666" width="7" height="7" fill="#7eacf5"/><rect x="503" y="666" width="7" height="7" fill="#8ab3f6"/><rect x="510" y="666" width="7" height="7" fill="#7eacf5"/><rect x="517" y="666" width="7" height="7" fill="#a3c3f9"/><rect x="524" y="666" width="7" height="7" fill="#a3c3f9"/><rect x="531" y="666" width="7" height="7" fill="#a3c3f9"/><rect x="538" y="666" width="7" height="7" fill="#7eacf5"/><rect x="545" y="666" width="7" height="7" fill="#a3c3f9"/><rect x="552" y="666" width="7" height="7" fill="#6a9ff3"/><rect x="559" y="666" width="7" height="7" fill="#8ab3f6"/><rect x="377" y="673" width="7" height="7" fill="#e2ebfd"/><rect x="384" y="673" width="7" height="7" fill="#b9d1fb"/><rect x="391" y="673" width="7" height="7" fill="#b9d1fb"/><rect x="398" y="673" width="7" height="7" fill="#b9d1fb"/><rect x="405" y="673" width="7" height="7" fill="#a3c3f9"/><rect x="412" y="673" width="7" height="7" fill="#b9d1fb"/><rect x="419" y="673" width="7" height="7" fill="#b9d1fb"/><rect x="426" y="673" width="7" height="7" fill="#cfe0fc"/><rect x="433" y="673" width="7" height="7" fill="#cfe0fc"/><rect x="440" y="673" width="7" height="7" fill="#a3c3f9"/><rect x="447" y="673" width="7" height="7" fill="#b9d1fb"/><rect x="454" y="673" width="7" height="7" fill="#b9d1fb"/><rect x="461" y="673" width="7" height="7" fill="#a3c3f9"/><rect x="468" y="673" width="7" height="7" fill="#b9d1fb"/><rect x="475" y="673" width="7" height="7" fill="#b9d1fb"/><rect x="482" y="673" width="7" height="7" fill="#b9d1fb"/><rect x="489" y="673" width="7" height="7" fill="#b9d1fb"/><rect x="496" y="673" width="7" height="7" fill="#b9d1fb"/><rect x="503" y="673" width="7" height="7" fill="#cfe0fc"/><rect x="510" y="673" width="7" height="7" fill="#b9d1fb"/><rect x="517" y="673" width="7" height="7" fill="#b9d1fb"/><rect x="524" y="673" width="7" height="7" fill="#b9d1fb"/><rect x="531" y="673" width="7" height="7" fill="#b9d1fb"/><rect x="538" y="673" width="7" height="7" fill="#b9d1fb"/><rect x="545" y="673" width="7" height="7" fill="#b9d1fb"/><rect x="552" y="673" width="7" height="7" fill="#b9d1fb"/><rect x="559" y="673" width="7" height="7" fill="#dfe9fd"/><rect x="328" y="771" width="324" height="7" fill="#f9f9f9"/><rect x="342" y="729" width="7" height="7" fill="#dde7fd"/><rect x="349" y="729" width="7" height="7" fill="#a9c4f9"/><rect x="356" y="729" width="7" height="7" fill="#72a8f6"/><rect x="363" y="729" width="7" height="7" fill="#d4e3fc"/><rect x="342" y="736" width="7" height="7" fill="#e6edfd"/><rect x="349" y="736" width="7" height="7" fill="#6d9ff4"/><rect x="356" y="736" width="7" height="7" fill="#3f86f4"/><rect x="363" y="736" width="7" height="7" fill="#d2e2fc"/><rect x="349" y="743" width="7" height="7" fill="#e2eafd"/><rect x="356" y="743" width="7" height="7" fill="#c9dcfb"/><rect x="391" y="722" width="7" height="7" fill="#bcd3fb"/><rect x="412" y="722" width="7" height="7" fill="#e3ecfd"/><rect x="468" y="722" width="7" height="7" fill="#f3f6fe"/><rect x="482" y="722" width="7" height="7" fill="#f3f6fe"/><rect x="531" y="722" width="7" height="7" fill="#e3ecfd"/><rect x="538" y="722" width="7" height="7" fill="#f3f6fe"/><rect x="552" y="722" width="7" height="7" fill="#e3ecfd"/><rect x="559" y="722" width="7" height="7" fill="#f3f6fe"/><rect x="573" y="722" width="7" height="7" fill="#f3f6fe"/><rect x="580" y="722" width="7" height="7" fill="#f3f6fe"/><rect x="377" y="729" width="7" height="7" fill="#f0f5fe"/><rect x="384" y="729" width="7" height="7" fill="#d9e6fd"/><rect x="391" y="729" width="7" height="7" fill="#eaf0fe"/><rect x="398" y="729" width="7" height="7" fill="#d9e6fd"/><rect x="405" y="729" width="7" height="7" fill="#eaf0fe"/><rect x="412" y="729" width="7" height="7" fill="#c3d8fb"/><rect x="419" y="729" width="7" height="7" fill="#c3d8fb"/><rect x="426" y="729" width="7" height="7" fill="#d9e6fd"/><rect x="433" y="729" width="7" height="7" fill="#d9e6fd"/><rect x="440" y="729" width="7" height="7" fill="#c3d8fb"/><rect x="447" y="729" width="7" height="7" fill="#d9e6fd"/><rect x="454" y="729" width="7" height="7" fill="#a9c6f9"/><rect x="461" y="729" width="7" height="7" fill="#c3d8fb"/><rect x="468" y="729" width="7" height="7" fill="#d9e6fd"/><rect x="475" y="729" width="7" height="7" fill="#c3d8fb"/><rect x="482" y="729" width="7" height="7" fill="#eaf0fe"/><rect x="489" y="729" width="7" height="7" fill="#c3d8fb"/><rect x="496" y="729" width="7" height="7" fill="#c3d8fb"/><rect x="503" y="729" width="7" height="7" fill="#c3d8fb"/><rect x="510" y="729" width="7" height="7" fill="#a9c6f9"/><rect x="517" y="729" width="7" height="7" fill="#d9e6fd"/><rect x="524" y="729" width="7" height="7" fill="#eaf0fe"/><rect x="531" y="729" width="7" height="7" fill="#eaf0fe"/><rect x="538" y="729" width="7" height="7" fill="#d9e6fd"/><rect x="545" y="729" width="7" height="7" fill="#a9c6f9"/><rect x="552" y="729" width="7" height="7" fill="#d9e6fd"/><rect x="559" y="729" width="7" height="7" fill="#d9e6fd"/><rect x="566" y="729" width="7" height="7" fill="#eaf0fe"/><rect x="573" y="729" width="7" height="7" fill="#eaf0fe"/><rect x="580" y="729" width="7" height="7" fill="#dfe9fd"/><rect x="377" y="736" width="7" height="7" fill="#f0f5fe"/><rect x="384" y="736" width="7" height="7" fill="#bcd3fb"/><rect x="391" y="736" width="7" height="7" fill="#a9c6f9"/><rect x="398" y="736" width="7" height="7" fill="#a9c6f9"/><rect x="405" y="736" width="7" height="7" fill="#bcd3fb"/><rect x="412" y="736" width="7" height="7" fill="#a9c6f9"/><rect x="419" y="736" width="7" height="7" fill="#d4e3fc"/><rect x="426" y="736" width="7" height="7" fill="#98bbf8"/><rect x="433" y="736" width="7" height="7" fill="#a9c6f9"/><rect x="440" y="736" width="7" height="7" fill="#bcd3fb"/><rect x="447" y="736" width="7" height="7" fill="#98bbf8"/><rect x="454" y="736" width="7" height="7" fill="#bcd3fb"/><rect x="461" y="736" width="7" height="7" fill="#98bbf8"/><rect x="468" y="736" width="7" height="7" fill="#98bbf8"/><rect x="475" y="736" width="7" height="7" fill="#a9c6f9"/><rect x="482" y="736" width="7" height="7" fill="#98bbf8"/><rect x="489" y="736" width="7" height="7" fill="#a9c6f9"/><rect x="496" y="736" width="7" height="7" fill="#bcd3fb"/><rect x="503" y="736" width="7" height="7" fill="#bcd3fb"/><rect x="510" y="736" width="7" height="7" fill="#98bbf8"/><rect x="517" y="736" width="7" height="7" fill="#a9c6f9"/><rect x="524" y="736" width="7" height="7" fill="#d4e3fc"/><rect x="531" y="736" width="7" height="7" fill="#a9c6f9"/><rect x="538" y="736" width="7" height="7" fill="#a9c6f9"/><rect x="545" y="736" width="7" height="7" fill="#bcd3fb"/><rect x="552" y="736" width="7" height="7" fill="#a9c6f9"/><rect x="559" y="736" width="7" height="7" fill="#bcd3fb"/><rect x="566" y="736" width="7" height="7" fill="#a9c6f9"/><rect x="573" y="736" width="7" height="7" fill="#98bbf8"/><rect x="580" y="736" width="7" height="7" fill="#98bbf8"/><rect x="377" y="743" width="7" height="7" fill="#f0f5fe"/><rect x="384" y="743" width="7" height="7" fill="#7eacf5"/><rect x="391" y="743" width="7" height="7" fill="#8ab3f6"/><rect x="398" y="743" width="7" height="7" fill="#7eacf5"/><rect x="405" y="743" width="7" height="7" fill="#7eacf5"/><rect x="412" y="743" width="7" height="7" fill="#6a9ff3"/><rect x="419" y="743" width="7" height="7" fill="#8ab3f6"/><rect x="426" y="743" width="7" height="7" fill="#8ab3f6"/><rect x="433" y="743" width="7" height="7" fill="#7eacf5"/><rect x="440" y="743" width="7" height="7" fill="#a3c3f9"/><rect x="447" y="743" width="7" height="7" fill="#8ab3f6"/><rect x="454" y="743" width="7" height="7" fill="#7eacf5"/><rect x="461" y="743" width="7" height="7" fill="#a3c3f9"/><rect x="468" y="743" width="7" height="7" fill="#6a9ff3"/><rect x="475" y="743" width="7" height="7" fill="#7eacf5"/><rect x="482" y="743" width="7" height="7" fill="#8ab3f6"/><rect x="489" y="743" width="7" height="7" fill="#8ab3f6"/><rect x="496" y="743" width="7" height="7" fill="#7eacf5"/><rect x="503" y="743" width="7" height="7" fill="#8ab3f6"/><rect x="510" y="743" width="7" height="7" fill="#8ab3f6"/><rect x="517" y="743" width="7" height="7" fill="#7eacf5"/><rect x="524" y="743" width="7" height="7" fill="#6a9ff3"/><rect x="531" y="743" width="7" height="7" fill="#6a9ff3"/><rect x="538" y="743" width="7" height="7" fill="#7eacf5"/><rect x="545" y="743" width="7" height="7" fill="#a3c3f9"/><rect x="552" y="743" width="7" height="7" fill="#6a9ff3"/><rect x="559" y="743" width="7" height="7" fill="#8ab3f6"/><rect x="566" y="743" width="7" height="7" fill="#8ab3f6"/><rect x="573" y="743" width="7" height="7" fill="#a3c3f9"/><rect x="580" y="743" width="7" height="7" fill="#8ab3f6"/><rect x="461" y="750" width="7" height="7" fill="#dde8fd"/><rect x="566" y="750" width="7" height="7" fill="#dde8fd"/><rect x="328" y="841" width="324" height="7" fill="#f9f9f9"/><rect x="349" y="792" width="7" height="7" fill="#d3e0fc"/><rect x="356" y="792" width="7" height="7" fill="#cbdcfb"/><rect x="363" y="792" width="7" height="7" fill="#eef4fe"/><rect x="342" y="799" width="7" height="7" fill="#dde7fd"/><rect x="349" y="799" width="7" height="7" fill="#a9c4f9"/><rect x="356" y="799" width="7" height="7" fill="#72a8f6"/><rect x="363" y="799" width="7" height="7" fill="#d4e3fc"/><rect x="342" y="806" width="7" height="7" fill="#e6edfd"/><rect x="349" y="806" width="7" height="7" fill="#6d9ff4"/><rect x="356" y="806" width="7" height="7" fill="#3f86f4"/><rect x="363" y="806" width="7" height="7" fill="#d2e2fc"/><rect x="349" y="813" width="7" height="7" fill="#e2eafd"/><rect x="356" y="813" width="7" height="7" fill="#c9dcfb"/><rect x="384" y="792" width="7" height="7" fill="#f3f6fe"/><rect x="398" y="792" width="7" height="7" fill="#e3ecfd"/><rect x="419" y="792" width="7" height="7" fill="#e3ecfd"/><rect x="489" y="792" width="7" height="7" fill="#f3f6fe"/><rect x="503" y="792" width="7" height="7" fill="#f3f6fe"/><rect x="510" y="792" width="7" height="7" fill="#f3f6fe"/><rect x="524" y="792" width="7" height="7" fill="#e3ecfd"/><rect x="538" y="792" width="7" height="7" fill="#e3ecfd"/><rect x="377" y="799" width="7" height="7" fill="#f0f5fe"/><rect x="384" y="799" width="7" height="7" fill="#eaf0fe"/><rect x="391" y="799" width="7" height="7" fill="#d9e6fd"/><rect x="398" y="799" width="7" height="7" fill="#d9e6fd"/><rect x="405" y="799" width="7" height="7" fill="#a9c6f9"/><rect x="412" y="799" width="7" height="7" fill="#d9e6fd"/><rect x="419" y="799" width="7" height="7" fill="#d9e6fd"/><rect x="426" y="799" width="7" height="7" fill="#d9e6fd"/><rect x="433" y="799" width="7" height="7" fill="#eaf0fe"/><rect x="440" y="799" width="7" height="7" fill="#eaf0fe"/><rect x="447" y="799" width="7" height="7" fill="#eaf0fe"/><rect x="454" y="799" width="7" height="7" fill="#c3d8fb"/><rect x="461" y="799" width="7" height="7" fill="#eaf0fe"/><rect x="468" y="799" width="7" height="7" fill="#a9c6f9"/><rect x="475" y="799" width="7" height="7" fill="#eaf0fe"/><rect x="482" y="799" width="7" height="7" fill="#eaf0fe"/><rect x="489" y="799" width="7" height="7" fill="#d9e6fd"/><rect x="496" y="799" width="7" height="7" fill="#eaf0fe"/><rect x="503" y="799" width="7" height="7" fill="#d9e6fd"/><rect x="510" y="799" width="7" height="7" fill="#a9c6f9"/><rect x="517" y="799" width="7" height="7" fill="#a9c6f9"/><rect x="524" y="799" width="7" height="7" fill="#c3d8fb"/><rect x="531" y="799" width="7" height="7" fill="#d9e6fd"/><rect x="538" y="799" width="7" height="7" fill="#dfe9fd"/><rect x="377" y="806" width="7" height="7" fill="#f0f5fe"/><rect x="384" y="806" width="7" height="7" fill="#d4e3fc"/><rect x="391" y="806" width="7" height="7" fill="#d4e3fc"/><rect x="398" y="806" width="7" height="7" fill="#bcd3fb"/><rect x="405" y="806" width="7" height="7" fill="#98bbf8"/><rect x="412" y="806" width="7" height="7" fill="#a9c6f9"/><rect x="419" y="806" width="7" height="7" fill="#98bbf8"/><rect x="426" y="806" width="7" height="7" fill="#bcd3fb"/><rect x="433" y="806" width="7" height="7" fill="#98bbf8"/><rect x="440" y="806" width="7" height="7" fill="#bcd3fb"/><rect x="447" y="806" width="7" height="7" fill="#a9c6f9"/><rect x="454" y="806" width="7" height="7" fill="#a9c6f9"/><rect x="461" y="806" width="7" height="7" fill="#d4e3fc"/><rect x="468" y="806" width="7" height="7" fill="#a9c6f9"/><rect x="475" y="806" width="7" height="7" fill="#bcd3fb"/><rect x="482" y="806" width="7" height="7" fill="#a9c6f9"/><rect x="489" y="806" width="7" height="7" fill="#a9c6f9"/><rect x="496" y="806" width="7" height="7" fill="#98bbf8"/><rect x="503" y="806" width="7" height="7" fill="#d4e3fc"/><rect x="510" y="806" width="7" height="7" fill="#a9c6f9"/><rect x="517" y="806" width="7" height="7" fill="#98bbf8"/><rect x="524" y="806" width="7" height="7" fill="#a9c6f9"/><rect x="531" y="806" width="7" height="7" fill="#bcd3fb"/><rect x="538" y="806" width="7" height="7" fill="#bcd3fb"/><rect x="377" y="813" width="7" height="7" fill="#f0f5fe"/><rect x="384" y="813" width="7" height="7" fill="#8ab3f6"/><rect x="391" y="813" width="7" height="7" fill="#8ab3f6"/><rect x="398" y="813" width="7" height="7" fill="#8ab3f6"/><rect x="405" y="813" width="7" height="7" fill="#a3c3f9"/><rect x="412" y="813" width="7" height="7" fill="#7eacf5"/><rect x="419" y="813" width="7" height="7" fill="#8ab3f6"/><rect x="426" y="813" width="7" height="7" fill="#a3c3f9"/><rect x="433" y="813" width="7" height="7" fill="#6a9ff3"/><rect x="440" y="813" width="7" height="7" fill="#7eacf5"/><rect x="447" y="813" width="7" height="7" fill="#8ab3f6"/><rect x="454" y="813" width="7" height="7" fill="#8ab3f6"/><rect x="461" y="813" width="7" height="7" fill="#8ab3f6"/><rect x="468" y="813" width="7" height="7" fill="#8ab3f6"/><rect x="475" y="813" width="7" height="7" fill="#8ab3f6"/><rect x="482" y="813" width="7" height="7" fill="#8ab3f6"/><rect x="489" y="813" width="7" height="7" fill="#8ab3f6"/><rect x="496" y="813" width="7" height="7" fill="#7eacf5"/><rect x="503" y="813" width="7" height="7" fill="#a3c3f9"/><rect x="510" y="813" width="7" height="7" fill="#a3c3f9"/><rect x="517" y="813" width="7" height="7" fill="#7eacf5"/><rect x="524" y="813" width="7" height="7" fill="#7eacf5"/><rect x="531" y="813" width="7" height="7" fill="#7eacf5"/><rect x="538" y="813" width="7" height="7" fill="#7eacf5"/><rect x="328" y="911" width="324" height="7" fill="#f9f9f9"/><rect x="349" y="869" width="7" height="7" fill="#d3e0fc"/><rect x="356" y="869" width="7" height="7" fill="#cbdcfb"/><rect x="363" y="869" width="7" height="7" fill="#eef4fe"/><rect x="342" y="876" width="7" height="7" fill="#dde7fd"/><rect x="349" y="876" width="7" height="7" fill="#a9c4f9"/><rect x="356" y="876" width="7" height="7" fill="#72a8f6"/><rect x="363" y="876" width="7" height="7" fill="#d4e3fc"/><rect x="342" y="883" width="7" height="7" fill="#e6edfd"/><rect x="349" y="883" width="7" height="7" fill="#6d9ff4"/><rect x="356" y="883" width="7" height="7" fill="#3f86f4"/><rect x="363" y="883" width="7" height="7" fill="#d2e2fc"/><rect x="349" y="890" width="7" height="7" fill="#e2eafd"/><rect x="356" y="890" width="7" height="7" fill="#c9dcfb"/><rect x="405" y="869" width="7" height="7" fill="#bcd3fb"/><rect x="433" y="869" width="7" height="7" fill="#f3f6fe"/><rect x="475" y="869" width="7" height="7" fill="#e3ecfd"/><rect x="482" y="869" width="7" height="7" fill="#f3f6fe"/><rect x="489" y="869" width="7" height="7" fill="#f3f6fe"/><rect x="517" y="869" width="7" height="7" fill="#e3ecfd"/><rect x="377" y="876" width="7" height="7" fill="#f0f5fe"/><rect x="384" y="876" width="7" height="7" fill="#bcd3fb"/><rect x="391" y="876" width="7" height="7" fill="#d4e3fc"/><rect x="398" y="876" width="7" height="7" fill="#98bbf8"/><rect x="405" y="876" width="7" height="7" fill="#98bbf8"/><rect x="412" y="876" width="7" height="7" fill="#d4e3fc"/><rect x="419" y="876" width="7" height="7" fill="#a9c6f9"/><rect x="426" y="876" width="7" height="7" fill="#a9c6f9"/><rect x="433" y="876" width="7" height="7" fill="#a9c6f9"/><rect x="440" y="876" width="7" height="7" fill="#bcd3fb"/><rect x="447" y="876" width="7" height="7" fill="#98bbf8"/><rect x="454" y="876" width="7" height="7" fill="#d4e3fc"/><rect x="461" y="876" width="7" height="7" fill="#98bbf8"/><rect x="468" y="876" width="7" height="7" fill="#bcd3fb"/><rect x="475" y="876" width="7" height="7" fill="#98bbf8"/><rect x="482" y="876" width="7" height="7" fill="#bcd3fb"/><rect x="489" y="876" width="7" height="7" fill="#bcd3fb"/><rect x="496" y="876" width="7" height="7" fill="#a9c6f9"/><rect x="503" y="876" width="7" height="7" fill="#98bbf8"/><rect x="510" y="876" width="7" height="7" fill="#a9c6f9"/><rect x="517" y="876" width="7" height="7" fill="#d4e3fc"/><rect x="524" y="876" width="7" height="7" fill="#bcd3fb"/><rect x="531" y="876" width="7" height="7" fill="#a9c6f9"/><rect x="538" y="876" width="7" height="7" fill="#a9c6f9"/><rect x="377" y="883" width="7" height="7" fill="#f0f5fe"/><rect x="384" y="883" width="7" height="7" fill="#a9c6f9"/><rect x="391" y="883" width="7" height="7" fill="#bcd3fb"/><rect x="398" y="883" width="7" height="7" fill="#98bbf8"/><rect x="405" y="883" width="7" height="7" fill="#a9c6f9"/><rect x="412" y="883" width="7" height="7" fill="#a9c6f9"/><rect x="419" y="883" width="7" height="7" fill="#bcd3fb"/><rect x="426" y="883" width="7" height="7" fill="#bcd3fb"/><rect x="433" y="883" width="7" height="7" fill="#bcd3fb"/><rect x="440" y="883" width="7" height="7" fill="#a9c6f9"/><rect x="447" y="883" width="7" height="7" fill="#bcd3fb"/><rect x="454" y="883" width="7" height="7" fill="#a9c6f9"/><rect x="461" y="883" width="7" height="7" fill="#a9c6f9"/><rect x="468" y="883" width="7" height="7" fill="#bcd3fb"/><rect x="475" y="883" width="7" height="7" fill="#d4e3fc"/><rect x="482" y="883" width="7" height="7" fill="#bcd3fb"/><rect x="489" y="883" width="7" height="7" fill="#98bbf8"/><rect x="496" y="883" width="7" height="7" fill="#bcd3fb"/><rect x="503" y="883" width="7" height="7" fill="#a9c6f9"/><rect x="510" y="883" width="7" height="7" fill="#a9c6f9"/><rect x="517" y="883" width="7" height="7" fill="#d4e3fc"/><rect x="524" y="883" width="7" height="7" fill="#98bbf8"/><rect x="531" y="883" width="7" height="7" fill="#a9c6f9"/><rect x="538" y="883" width="7" height="7" fill="#a9c6f9"/><rect x="377" y="890" width="7" height="7" fill="#e2ebfd"/><rect x="384" y="890" width="7" height="7" fill="#b9d1fb"/><rect x="391" y="890" width="7" height="7" fill="#b9d1fb"/><rect x="398" y="890" width="7" height="7" fill="#b9d1fb"/><rect x="405" y="890" width="7" height="7" fill="#b9d1fb"/><rect x="412" y="890" width="7" height="7" fill="#b9d1fb"/><rect x="419" y="890" width="7" height="7" fill="#a3c3f9"/><rect x="426" y="890" width="7" height="7" fill="#b9d1fb"/><rect x="433" y="890" width="7" height="7" fill="#b9d1fb"/><rect x="440" y="890" width="7" height="7" fill="#b9d1fb"/><rect x="447" y="890" width="7" height="7" fill="#b9d1fb"/><rect x="454" y="890" width="7" height="7" fill="#b9d1fb"/><rect x="461" y="890" width="7" height="7" fill="#b9d1fb"/><rect x="468" y="890" width="7" height="7" fill="#b9d1fb"/><rect x="475" y="890" width="7" height="7" fill="#b9d1fb"/><rect x="482" y="890" width="7" height="7" fill="#b9d1fb"/><rect x="489" y="890" width="7" height="7" fill="#b9d1fb"/><rect x="496" y="890" width="7" height="7" fill="#cfe0fc"/><rect x="503" y="890" width="7" height="7" fill="#b9d1fb"/><rect x="510" y="890" width="7" height="7" fill="#a3c3f9"/><rect x="517" y="890" width="7" height="7" fill="#b9d1fb"/><rect x="524" y="890" width="7" height="7" fill="#b9d1fb"/><rect x="531" y="890" width="7" height="7" fill="#b9d1fb"/><rect x="538" y="890" width="7" height="7" fill="#dfe9fd"/><rect x="328" y="988" width="324" height="7" fill="#f9f9f9"/><rect x="349" y="939" width="7" height="7" fill="#d3e0fc"/><rect x="356" y="939" width="7" height="7" fill="#cbdcfb"/><rect x="363" y="939" width="7" height="7" fill="#eef4fe"/><rect x="342" y="946" width="7" height="7" fill="#dde7fd"/><rect x="349" y="946" width="7" height="7" fill="#a9c4f9"/><rect x="356" y="946" width="7" height="7" fill="#72a8f6"/><rect x="363" y="946" width="7" height="7" fill="#d4e3fc"/><rect x="342" y="953" width="7" height="7" fill="#e6edfd"/><rect x="349" y="953" width="7" height="7" fill="#6d9ff4"/><rect x="356" y="953" width="7" height="7" fill="#3f86f4"/><rect x="363" y="953" width="7" height="7" fill="#d2e2fc"/><rect x="349" y="960" width="7" height="7" fill="#e2eafd"/><rect x="356" y="960" width="7" height="7" fill="#c9dcfb"/><rect x="391" y="939" width="7" height="7" fill="#e3ecfd"/><rect x="433" y="939" width="7" height="7" fill="#e3ecfd"/><rect x="461" y="939" width="7" height="7" fill="#bcd3fb"/><rect x="496" y="939" width="7" height="7" fill="#e3ecfd"/><rect x="503" y="939" width="7" height="7" fill="#e3ecfd"/><rect x="510" y="939" width="7" height="7" fill="#f3f6fe"/><rect x="517" y="939" width="7" height="7" fill="#bcd3fb"/><rect x="524" y="939" width="7" height="7" fill="#e3ecfd"/><rect x="545" y="939" width="7" height="7" fill="#e3ecfd"/><rect x="552" y="939" width="7" height="7" fill="#f3f6fe"/><rect x="377" y="946" width="7" height="7" fill="#f0f5fe"/><rect x="384" y="946" width="7" height="7" fill="#a9c6f9"/><rect x="391" y="946" width="7" height="7" fill="#a9c6f9"/><rect x="398" y="946" width="7" height="7" fill="#a9c6f9"/><rect x="405" y="946" width="7" height="7" fill="#a9c6f9"/><rect x="412" y="946" width="7" height="7" fill="#bcd3fb"/><rect x="419" y="946" width="7" height="7" fill="#d4e3fc"/><rect x="426" y="946" width="7" height="7" fill="#a9c6f9"/><rect x="433" y="946" width="7" height="7" fill="#d4e3fc"/><rect x="440" y="946" width="7" height="7" fill="#a9c6f9"/><rect x="447" y="946" width="7" height="7" fill="#bcd3fb"/><rect x="454" y="946" width="7" height="7" fill="#98bbf8"/><rect x="461" y="946" width="7" height="7" fill="#98bbf8"/><rect x="468" y="946" width="7" height="7" fill="#bcd3fb"/><rect x="475" y="946" width="7" height="7" fill="#a9c6f9"/><rect x="482" y="946" width="7" height="7" fill="#bcd3fb"/><rect x="489" y="946" width="7" height="7" fill="#bcd3fb"/><rect x="496" y="946" width="7" height="7" fill="#d4e3fc"/><rect x="503" y="946" width="7" height="7" fill="#a9c6f9"/><rect x="510" y="946" width="7" height="7" fill="#bcd3fb"/><rect x="517" y="946" width="7" height="7" fill="#98bbf8"/><rect x="524" y="946" width="7" height="7" fill="#a9c6f9"/><rect x="531" y="946" width="7" height="7" fill="#bcd3fb"/><rect x="538" y="946" width="7" height="7" fill="#98bbf8"/><rect x="545" y="946" width="7" height="7" fill="#98bbf8"/><rect x="552" y="946" width="7" height="7" fill="#a9c6f9"/><rect x="559" y="946" width="7" height="7" fill="#a9c6f9"/><rect x="566" y="946" width="7" height="7" fill="#a9c6f9"/><rect x="573" y="946" width="7" height="7" fill="#d4e3fc"/><rect x="580" y="946" width="7" height="7" fill="#a9c6f9"/><rect x="377" y="953" width="7" height="7" fill="#f0f5fe"/><rect x="384" y="953" width="7" height="7" fill="#a3c3f9"/><rect x="391" y="953" width="7" height="7" fill="#a3c3f9"/><rect x="398" y="953" width="7" height="7" fill="#8ab3f6"/><rect x="405" y="953" width="7" height="7" fill="#8ab3f6"/><rect x="412" y="953" width="7" height="7" fill="#6a9ff3"/><rect x="419" y="953" width="7" height="7" fill="#7eacf5"/><rect x="426" y="953" width="7" height="7" fill="#8ab3f6"/><rect x="433" y="953" width="7" height="7" fill="#a3c3f9"/><rect x="440" y="953" width="7" height="7" fill="#8ab3f6"/><rect x="447" y="953" width="7" height="7" fill="#8ab3f6"/><rect x="454" y="953" width="7" height="7" fill="#8ab3f6"/><rect x="461" y="953" width="7" height="7" fill="#a3c3f9"/><rect x="468" y="953" width="7" height="7" fill="#a3c3f9"/><rect x="475" y="953" width="7" height="7" fill="#7eacf5"/><rect x="482" y="953" width="7" height="7" fill="#6a9ff3"/><rect x="489" y="953" width="7" height="7" fill="#8ab3f6"/><rect x="496" y="953" width="7" height="7" fill="#8ab3f6"/><rect x="503" y="953" width="7" height="7" fill="#7eacf5"/><rect x="510" y="953" width="7" height="7" fill="#6a9ff3"/><rect x="517" y="953" width="7" height="7" fill="#6a9ff3"/><rect x="524" y="953" width="7" height="7" fill="#7eacf5"/><rect x="531" y="953" width="7" height="7" fill="#8ab3f6"/><rect x="538" y="953" width="7" height="7" fill="#7eacf5"/><rect x="545" y="953" width="7" height="7" fill="#7eacf5"/><rect x="552" y="953" width="7" height="7" fill="#6a9ff3"/><rect x="559" y="953" width="7" height="7" fill="#8ab3f6"/><rect x="566" y="953" width="7" height="7" fill="#a3c3f9"/><rect x="573" y="953" width="7" height="7" fill="#a3c3f9"/><rect x="580" y="953" width="7" height="7" fill="#a3c3f9"/><rect x="377" y="960" width="7" height="7" fill="#e2ebfd"/><rect x="384" y="960" width="7" height="7" fill="#b9d1fb"/><rect x="391" y="960" width="7" height="7" fill="#b9d1fb"/><rect x="398" y="960" width="7" height="7" fill="#b9d1fb"/><rect x="405" y="960" width="7" height="7" fill="#b9d1fb"/><rect x="412" y="960" width="7" height="7" fill="#b9d1fb"/><rect x="419" y="960" width="7" height="7" fill="#b9d1fb"/><rect x="426" y="960" width="7" height="7" fill="#b9d1fb"/><rect x="433" y="960" width="7" height="7" fill="#b9d1fb"/><rect x="440" y="960" width="7" height="7" fill="#b9d1fb"/><rect x="447" y="960" width="7" height="7" fill="#b9d1fb"/><rect x="454" y="960" width="7" height="7" fill="#b9d1fb"/><rect x="461" y="960" width="7" height="7" fill="#b9d1fb"/><rect x="468" y="960" width="7" height="7" fill="#b9d1fb"/><rect x="475" y="960" width="7" height="7" fill="#b9d1fb"/><rect x="482" y="960" width="7" height="7" fill="#cfe0fc"/><rect x="489" y="960" width="7" height="7" fill="#a3c3f9"/><rect x="496" y="960" width="7" height="7" fill="#cfe0fc"/><rect x="503" y="960" width="7" height="7" fill="#b9d1fb"/><rect x="510" y="960" width="7" height="7" fill="#b9d1fb"/><rect x="517" y="960" width="7" height="7" fill="#b9d1fb"/><rect x="524" y="960" width="7" height="7" fill="#b9d1fb"/><rect x="531" y="960" width="7" height="7" fill="#b9d1fb"/><rect x="538" y="960" width="7" height="7" fill="#b9d1fb"/><rect x="545" y="960" width="7" height="7" fill="#b9d1fb"/><rect x="552" y="960" width="7" height="7" fill="#b9d1fb"/><rect x="559" y="960" width="7" height="7" fill="#b9d1fb"/><rect x="566" y="960" width="7" height="7" fill="#b9d1fb"/><rect x="573" y="960" width="7" height="7" fill="#b9d1fb"/><rect x="580" y="960" width="7" height="7" fill="#dfe9fd"/><rect x="328" y="1058" width="324" height="7" fill="#f9f9f9"/><rect x="342" y="1016" width="7" height="7" fill="#dde7fd"/><rect x="349" y="1016" width="7" height="7" fill="#a9c4f9"/><rect x="356" y="1016" width="7" height="7" fill="#72a8f6"/><rect x="363" y="1016" width="7" height="7" fill="#d4e3fc"/><rect x="342" y="1023" width="7" height="7" fill="#e6edfd"/><rect x="349" y="1023" width="7" height="7" fill="#6d9ff4"/><rect x="356" y="1023" width="7" height="7" fill="#3f86f4"/><rect x="363" y="1023" width="7" height="7" fill="#d2e2fc"/><rect x="349" y="1030" width="7" height="7" fill="#e2eafd"/><rect x="356" y="1030" width="7" height="7" fill="#c9dcfb"/><rect x="384" y="1009" width="7" height="7" fill="#f3f6fe"/><rect x="405" y="1009" width="7" height="7" fill="#f3f6fe"/><rect x="433" y="1009" width="7" height="7" fill="#f3f6fe"/><rect x="468" y="1009" width="7" height="7" fill="#e3ecfd"/><rect x="496" y="1009" width="7" height="7" fill="#bcd3fb"/><rect x="517" y="1009" width="7" height="7" fill="#f3f6fe"/><rect x="531" y="1009" width="7" height="7" fill="#bcd3fb"/><rect x="552" y="1009" width="7" height="7" fill="#f3f6fe"/><rect x="559" y="1009" width="7" height="7" fill="#f3f6fe"/><rect x="566" y="1009" width="7" height="7" fill="#e3ecfd"/><rect x="377" y="1016" width="7" height="7" fill="#f0f5fe"/><rect x="384" y="1016" width="7" height="7" fill="#eaf0fe"/><rect x="391" y="1016" width="7" height="7" fill="#a9c6f9"/><rect x="398" y="1016" width="7" height="7" fill="#d9e6fd"/><rect x="405" y="1016" width="7" height="7" fill="#a9c6f9"/><rect x="412" y="1016" width="7" height="7" fill="#d9e6fd"/><rect x="419" y="1016" width="7" height="7" fill="#a9c6f9"/><rect x="426" y="1016" width="7" height="7" fill="#d9e6fd"/><rect x="433" y="1016" width="7" height="7" fill="#eaf0fe"/><rect x="440" y="1016" width="7" height="7" fill="#c3d8fb"/><rect x="447" y="1016" width="7" height="7" fill="#a9c6f9"/><rect x="454" y="1016" width="7" height="7" fill="#eaf0fe"/><rect x="461" y="1016" width="7" height="7" fill="#d9e6fd"/><rect x="468" y="1016" width="7" height="7" fill="#d9e6fd"/><rect x="475" y="1016" width="7" height="7" fill="#eaf0fe"/><rect x="482" y="1016" width="7" height="7" fill="#d9e6fd"/><rect x="489" y="1016" width="7" height="7" fill="#eaf0fe"/><rect x="496" y="1016" width="7" height="7" fill="#eaf0fe"/><rect x="503" y="1016" width="7" height="7" fill="#eaf0fe"/><rect x="510" y="1016" width="7" height="7" fill="#d9e6fd"/><rect x="517" y="1016" width="7" height="7" fill="#c3d8fb"/><rect x="524" y="1016" width="7" height="7" fill="#eaf0fe"/><rect x="531" y="1016" width="7" height="7" fill="#eaf0fe"/><rect x="538" y="1016" width="7" height="7" fill="#eaf0fe"/><rect x="545" y="1016" width="7" height="7" fill="#c3d8fb"/><rect x="552" y="1016" width="7" height="7" fill="#eaf0fe"/><rect x="559" y="1016" width="7" height="7" fill="#eaf0fe"/><rect x="566" y="1016" width="7" height="7" fill="#eaf0fe"/><rect x="573" y="1016" width="7" height="7" fill="#c3d8fb"/><rect x="580" y="1016" width="7" height="7" fill="#d9e6fd"/><rect x="587" y="1016" width="7" height="7" fill="#dfe9fd"/><rect x="377" y="1023" width="7" height="7" fill="#f0f5fe"/><rect x="384" y="1023" width="7" height="7" fill="#a9c6f9"/><rect x="391" y="1023" width="7" height="7" fill="#a9c6f9"/><rect x="398" y="1023" width="7" height="7" fill="#bcd3fb"/><rect x="405" y="1023" width="7" height="7" fill="#bcd3fb"/><rect x="412" y="1023" width="7" height="7" fill="#bcd3fb"/><rect x="419" y="1023" width="7" height="7" fill="#a9c6f9"/><rect x="426" y="1023" width="7" height="7" fill="#a9c6f9"/><rect x="433" y="1023" width="7" height="7" fill="#98bbf8"/><rect x="440" y="1023" width="7" height="7" fill="#bcd3fb"/><rect x="447" y="1023" width="7" height="7" fill="#a9c6f9"/><rect x="454" y="1023" width="7" height="7" fill="#a9c6f9"/><rect x="461" y="1023" width="7" height="7" fill="#d4e3fc"/><rect x="468" y="1023" width="7" height="7" fill="#a9c6f9"/><rect x="475" y="1023" width="7" height="7" fill="#bcd3fb"/><rect x="482" y="1023" width="7" height="7" fill="#bcd3fb"/><rect x="489" y="1023" width="7" height="7" fill="#bcd3fb"/><rect x="496" y="1023" width="7" height="7" fill="#98bbf8"/><rect x="503" y="1023" width="7" height="7" fill="#d4e3fc"/><rect x="510" y="1023" width="7" height="7" fill="#bcd3fb"/><rect x="517" y="1023" width="7" height="7" fill="#a9c6f9"/><rect x="524" y="1023" width="7" height="7" fill="#98bbf8"/><rect x="531" y="1023" width="7" height="7" fill="#a9c6f9"/><rect x="538" y="1023" width="7" height="7" fill="#a9c6f9"/><rect x="545" y="1023" width="7" height="7" fill="#d4e3fc"/><rect x="552" y="1023" width="7" height="7" fill="#bcd3fb"/><rect x="559" y="1023" width="7" height="7" fill="#98bbf8"/><rect x="566" y="1023" width="7" height="7" fill="#bcd3fb"/><rect x="573" y="1023" width="7" height="7" fill="#98bbf8"/><rect x="580" y="1023" width="7" height="7" fill="#bcd3fb"/><rect x="587" y="1023" width="7" height="7" fill="#a9c6f9"/><rect x="377" y="1030" width="7" height="7" fill="#f0f5fe"/><rect x="384" y="1030" width="7" height="7" fill="#8ab3f6"/><rect x="391" y="1030" width="7" height="7" fill="#7eacf5"/><rect x="398" y="1030" width="7" height="7" fill="#7eacf5"/><rect x="405" y="1030" width="7" height="7" fill="#a3c3f9"/><rect x="412" y="1030" width="7" height="7" fill="#8ab3f6"/><rect x="419" y="1030" width="7" height="7" fill="#7eacf5"/><rect x="426" y="1030" width="7" height="7" fill="#7eacf5"/><rect x="433" y="1030" width="7" height="7" fill="#7eacf5"/><rect x="440" y="1030" width="7" height="7" fill="#8ab3f6"/><rect x="447" y="1030" width="7" height="7" fill="#8ab3f6"/><rect x="454" y="1030" width="7" height="7" fill="#7eacf5"/><rect x="461" y="1030" width="7" height="7" fill="#6a9ff3"/><rect x="468" y="1030" width="7" height="7" fill="#8ab3f6"/><rect x="475" y="1030" width="7" height="7" fill="#7eacf5"/><rect x="482" y="1030" width="7" height="7" fill="#a3c3f9"/><rect x="489" y="1030" width="7" height="7" fill="#6a9ff3"/><rect x="496" y="1030" width="7" height="7" fill="#8ab3f6"/><rect x="503" y="1030" width="7" height="7" fill="#8ab3f6"/><rect x="510" y="1030" width="7" height="7" fill="#6a9ff3"/><rect x="517" y="1030" width="7" height="7" fill="#6a9ff3"/><rect x="524" y="1030" width="7" height="7" fill="#7eacf5"/><rect x="531" y="1030" width="7" height="7" fill="#8ab3f6"/><rect x="538" y="1030" width="7" height="7" fill="#6a9ff3"/><rect x="545" y="1030" width="7" height="7" fill="#7eacf5"/><rect x="552" y="1030" width="7" height="7" fill="#a3c3f9"/><rect x="559" y="1030" width="7" height="7" fill="#7eacf5"/><rect x="566" y="1030" width="7" height="7" fill="#a3c3f9"/><rect x="573" y="1030" width="7" height="7" fill="#8ab3f6"/><rect x="580" y="1030" width="7" height="7" fill="#a3c3f9"/><rect x="587" y="1030" width="7" height="7" fill="#8ab3f6"/><rect x="566" y="1037" width="7" height="7" fill="#dde8fd"/><rect x="475" y="1037" width="7" height="7" fill="#dde8fd"/><rect x="328" y="1128" width="324" height="7" fill="#f9f9f9"/><rect x="349" y="1086" width="7" height="7" fill="#d3e0fc"/><rect x="356" y="1086" width="7" height="7" fill="#cbdcfb"/><rect x="363" y="1086" width="7" height="7" fill="#eef4fe"/><rect x="342" y="1093" width="7" height="7" fill="#dde7fd"/><rect x="349" y="1093" width="7" height="7" fill="#a9c4f9"/><rect x="356" y="1093" width="7" height="7" fill="#72a8f6"/><rect x="363" y="1093" width="7" height="7" fill="#d4e3fc"/><rect x="342" y="1100" width="7" height="7" fill="#e6edfd"/><rect x="349" y="1100" width="7" height="7" fill="#6d9ff4"/><rect x="356" y="1100" width="7" height="7" fill="#3f86f4"/><rect x="363" y="1100" width="7" height="7" fill="#d2e2fc"/><rect x="349" y="1107" width="7" height="7" fill="#e2eafd"/><rect x="356" y="1107" width="7" height="7" fill="#c9dcfb"/><rect x="384" y="1086" width="7" height="7" fill="#f3f6fe"/><rect x="440" y="1086" width="7" height="7" fill="#f3f6fe"/><rect x="447" y="1086" width="7" height="7" fill="#e3ecfd"/><rect x="468" y="1086" width="7" height="7" fill="#f3f6fe"/><rect x="482" y="1086" width="7" height="7" fill="#f3f6fe"/><rect x="377" y="1093" width="7" height="7" fill="#f0f5fe"/><rect x="384" y="1093" width="7" height="7" fill="#bcd3fb"/><rect x="391" y="1093" width="7" height="7" fill="#98bbf8"/><rect x="398" y="1093" width="7" height="7" fill="#bcd3fb"/><rect x="405" y="1093" width="7" height="7" fill="#bcd3fb"/><rect x="412" y="1093" width="7" height="7" fill="#a9c6f9"/><rect x="419" y="1093" width="7" height="7" fill="#bcd3fb"/><rect x="426" y="1093" width="7" height="7" fill="#bcd3fb"/><rect x="433" y="1093" width="7" height="7" fill="#a9c6f9"/><rect x="440" y="1093" width="7" height="7" fill="#98bbf8"/><rect x="447" y="1093" width="7" height="7" fill="#98bbf8"/><rect x="454" y="1093" width="7" height="7" fill="#bcd3fb"/><rect x="461" y="1093" width="7" height="7" fill="#a9c6f9"/><rect x="468" y="1093" width="7" height="7" fill="#bcd3fb"/><rect x="475" y="1093" width="7" height="7" fill="#a9c6f9"/><rect x="482" y="1093" width="7" height="7" fill="#a9c6f9"/><rect x="489" y="1093" width="7" height="7" fill="#bcd3fb"/><rect x="496" y="1093" width="7" height="7" fill="#a9c6f9"/><rect x="503" y="1093" width="7" height="7" fill="#bcd3fb"/><rect x="510" y="1093" width="7" height="7" fill="#bcd3fb"/><rect x="517" y="1093" width="7" height="7" fill="#a9c6f9"/><rect x="524" y="1093" width="7" height="7" fill="#bcd3fb"/><rect x="531" y="1093" width="7" height="7" fill="#a9c6f9"/><rect x="377" y="1100" width="7" height="7" fill="#f0f5fe"/><rect x="384" y="1100" width="7" height="7" fill="#98bbf8"/><rect x="391" y="1100" width="7" height="7" fill="#98bbf8"/><rect x="398" y="1100" width="7" height="7" fill="#bcd3fb"/><rect x="405" y="1100" width="7" height="7" fill="#a9c6f9"/><rect x="412" y="1100" width="7" height="7" fill="#bcd3fb"/><rect x="419" y="1100" width="7" height="7" fill="#bcd3fb"/><rect x="426" y="1100" width="7" height="7" fill="#d4e3fc"/><rect x="433" y="1100" width="7" height="7" fill="#a9c6f9"/><rect x="440" y="1100" width="7" height="7" fill="#98bbf8"/><rect x="447" y="1100" width="7" height="7" fill="#d4e3fc"/><rect x="454" y="1100" width="7" height="7" fill="#98bbf8"/><rect x="461" y="1100" width="7" height="7" fill="#98bbf8"/><rect x="468" y="1100" width="7" height="7" fill="#a9c6f9"/><rect x="475" y="1100" width="7" height="7" fill="#d4e3fc"/><rect x="482" y="1100" width="7" height="7" fill="#bcd3fb"/><rect x="489" y="1100" width="7" height="7" fill="#d4e3fc"/><rect x="496" y="1100" width="7" height="7" fill="#d4e3fc"/><rect x="503" y="1100" width="7" height="7" fill="#a9c6f9"/><rect x="510" y="1100" width="7" height="7" fill="#98bbf8"/><rect x="517" y="1100" width="7" height="7" fill="#d4e3fc"/><rect x="524" y="1100" width="7" height="7" fill="#a9c6f9"/><rect x="531" y="1100" width="7" height="7" fill="#bcd3fb"/><rect x="377" y="1107" width="7" height="7" fill="#e2ebfd"/><rect x="384" y="1107" width="7" height="7" fill="#b9d1fb"/><rect x="391" y="1107" width="7" height="7" fill="#b9d1fb"/><rect x="398" y="1107" width="7" height="7" fill="#a3c3f9"/><rect x="405" y="1107" width="7" height="7" fill="#b9d1fb"/><rect x="412" y="1107" width="7" height="7" fill="#b9d1fb"/><rect x="419" y="1107" width="7" height="7" fill="#b9d1fb"/><rect x="426" y="1107" width="7" height="7" fill="#b9d1fb"/><rect x="433" y="1107" width="7" height="7" fill="#a3c3f9"/><rect x="440" y="1107" width="7" height="7" fill="#b9d1fb"/><rect x="447" y="1107" width="7" height="7" fill="#b9d1fb"/><rect x="454" y="1107" width="7" height="7" fill="#b9d1fb"/><rect x="461" y="1107" width="7" height="7" fill="#b9d1fb"/><rect x="468" y="1107" width="7" height="7" fill="#b9d1fb"/><rect x="475" y="1107" width="7" height="7" fill="#b9d1fb"/><rect x="482" y="1107" width="7" height="7" fill="#b9d1fb"/><rect x="489" y="1107" width="7" height="7" fill="#a3c3f9"/><rect x="496" y="1107" width="7" height="7" fill="#b9d1fb"/><rect x="503" y="1107" width="7" height="7" fill="#a3c3f9"/><rect x="510" y="1107" width="7" height="7" fill="#b9d1fb"/><rect x="517" y="1107" width="7" height="7" fill="#b9d1fb"/><rect x="524" y="1107" width="7" height="7" fill="#b9d1fb"/><rect x="531" y="1107" width="7" height="7" fill="#dfe9fd"/><rect x="328" y="1205" width="324" height="7" fill="#f9f9f9"/><rect x="349" y="1156" width="7" height="7" fill="#d3e0fc"/><rect x="356" y="1156" width="7" height="7" fill="#cbdcfb"/><rect x="363" y="1156" width="7" height="7" fill="#eef4fe"/><rect x="342" y="1163" width="7" height="7" fill="#dde7fd"/><rect x="349" y="1163" width="7" height="7" fill="#a9c4f9"/><rect x="356" y="1163" width="7" height="7" fill="#72a8f6"/><rect x="363" y="1163" width="7" height="7" fill="#d4e3fc"/><rect x="342" y="1170" width="7" height="7" fill="#e6edfd"/><rect x="349" y="1170" width="7" height="7" fill="#6d9ff4"/><rect x="356" y="1170" width="7" height="7" fill="#3f86f4"/><rect x="363" y="1170" width="7" height="7" fill="#d2e2fc"/><rect x="349" y="1177" width="7" height="7" fill="#e2eafd"/><rect x="356" y="1177" width="7" height="7" fill="#c9dcfb"/><rect x="405" y="1156" width="7" height="7" fill="#f3f6fe"/><rect x="426" y="1156" width="7" height="7" fill="#e3ecfd"/><rect x="440" y="1156" width="7" height="7" fill="#bcd3fb"/><rect x="461" y="1156" width="7" height="7" fill="#f3f6fe"/><rect x="475" y="1156" width="7" height="7" fill="#bcd3fb"/><rect x="496" y="1156" width="7" height="7" fill="#f3f6fe"/><rect x="517" y="1156" width="7" height="7" fill="#f3f6fe"/><rect x="531" y="1156" width="7" height="7" fill="#f3f6fe"/><rect x="552" y="1156" width="7" height="7" fill="#bcd3fb"/><rect x="377" y="1163" width="7" height="7" fill="#f0f5fe"/><rect x="384" y="1163" width="7" height="7" fill="#eaf0fe"/><rect x="391" y="1163" width="7" height="7" fill="#eaf0fe"/><rect x="398" y="1163" width="7" height="7" fill="#eaf0fe"/><rect x="405" y="1163" width="7" height="7" fill="#eaf0fe"/><rect x="412" y="1163" width="7" height="7" fill="#d9e6fd"/><rect x="419" y="1163" width="7" height="7" fill="#d9e6fd"/><rect x="426" y="1163" width="7" height="7" fill="#d9e6fd"/><rect x="433" y="1163" width="7" height="7" fill="#a9c6f9"/><rect x="440" y="1163" width="7" height="7" fill="#eaf0fe"/><rect x="447" y="1163" width="7" height="7" fill="#eaf0fe"/><rect x="454" y="1163" width="7" height="7" fill="#c3d8fb"/><rect x="461" y="1163" width="7" height="7" fill="#eaf0fe"/><rect x="468" y="1163" width="7" height="7" fill="#eaf0fe"/><rect x="475" y="1163" width="7" height="7" fill="#d9e6fd"/><rect x="482" y="1163" width="7" height="7" fill="#eaf0fe"/><rect x="489" y="1163" width="7" height="7" fill="#d9e6fd"/><rect x="496" y="1163" width="7" height="7" fill="#eaf0fe"/><rect x="503" y="1163" width="7" height="7" fill="#d9e6fd"/><rect x="510" y="1163" width="7" height="7" fill="#d9e6fd"/><rect x="517" y="1163" width="7" height="7" fill="#eaf0fe"/><rect x="524" y="1163" width="7" height="7" fill="#d9e6fd"/><rect x="531" y="1163" width="7" height="7" fill="#d9e6fd"/><rect x="538" y="1163" width="7" height="7" fill="#eaf0fe"/><rect x="545" y="1163" width="7" height="7" fill="#a9c6f9"/><rect x="552" y="1163" width="7" height="7" fill="#eaf0fe"/><rect x="559" y="1163" width="7" height="7" fill="#eaf0fe"/><rect x="566" y="1163" width="7" height="7" fill="#dfe9fd"/><rect x="377" y="1170" width="7" height="7" fill="#f0f5fe"/><rect x="384" y="1170" width="7" height="7" fill="#8ab3f6"/><rect x="391" y="1170" width="7" height="7" fill="#7eacf5"/><rect x="398" y="1170" width="7" height="7" fill="#a3c3f9"/><rect x="405" y="1170" width="7" height="7" fill="#a3c3f9"/><rect x="412" y="1170" width="7" height="7" fill="#7eacf5"/><rect x="419" y="1170" width="7" height="7" fill="#8ab3f6"/><rect x="426" y="1170" width="7" height="7" fill="#8ab3f6"/><rect x="433" y="1170" width="7" height="7" fill="#7eacf5"/><rect x="440" y="1170" width="7" height="7" fill="#7eacf5"/><rect x="447" y="1170" width="7" height="7" fill="#7eacf5"/><rect x="454" y="1170" width="7" height="7" fill="#7eacf5"/><rect x="461" y="1170" width="7" height="7" fill="#7eacf5"/><rect x="468" y="1170" width="7" height="7" fill="#6a9ff3"/><rect x="475" y="1170" width="7" height="7" fill="#a3c3f9"/><rect x="482" y="1170" width="7" height="7" fill="#8ab3f6"/><rect x="489" y="1170" width="7" height="7" fill="#a3c3f9"/><rect x="496" y="1170" width="7" height="7" fill="#8ab3f6"/><rect x="503" y="1170" width="7" height="7" fill="#7eacf5"/><rect x="510" y="1170" width="7" height="7" fill="#7eacf5"/><rect x="517" y="1170" width="7" height="7" fill="#8ab3f6"/><rect x="524" y="1170" width="7" height="7" fill="#8ab3f6"/><rect x="531" y="1170" width="7" height="7" fill="#a3c3f9"/><rect x="538" y="1170" width="7" height="7" fill="#8ab3f6"/><rect x="545" y="1170" width="7" height="7" fill="#7eacf5"/><rect x="552" y="1170" width="7" height="7" fill="#6a9ff3"/><rect x="559" y="1170" width="7" height="7" fill="#8ab3f6"/><rect x="566" y="1170" width="7" height="7" fill="#8ab3f6"/><rect x="377" y="1177" width="7" height="7" fill="#f0f5fe"/><rect x="384" y="1177" width="7" height="7" fill="#bcd3fb"/><rect x="391" y="1177" width="7" height="7" fill="#bcd3fb"/><rect x="398" y="1177" width="7" height="7" fill="#bcd3fb"/><rect x="405" y="1177" width="7" height="7" fill="#98bbf8"/><rect x="412" y="1177" width="7" height="7" fill="#a9c6f9"/><rect x="419" y="1177" width="7" height="7" fill="#a9c6f9"/><rect x="426" y="1177" width="7" height="7" fill="#a9c6f9"/><rect x="433" y="1177" width="7" height="7" fill="#a9c6f9"/><rect x="440" y="1177" width="7" height="7" fill="#98bbf8"/><rect x="447" y="1177" width="7" height="7" fill="#98bbf8"/><rect x="454" y="1177" width="7" height="7" fill="#98bbf8"/><rect x="461" y="1177" width="7" height="7" fill="#a9c6f9"/><rect x="468" y="1177" width="7" height="7" fill="#98bbf8"/><rect x="475" y="1177" width="7" height="7" fill="#98bbf8"/><rect x="482" y="1177" width="7" height="7" fill="#bcd3fb"/><rect x="489" y="1177" width="7" height="7" fill="#98bbf8"/><rect x="496" y="1177" width="7" height="7" fill="#bcd3fb"/><rect x="503" y="1177" width="7" height="7" fill="#a9c6f9"/><rect x="510" y="1177" width="7" height="7" fill="#a9c6f9"/><rect x="517" y="1177" width="7" height="7" fill="#a9c6f9"/><rect x="524" y="1177" width="7" height="7" fill="#a9c6f9"/><rect x="531" y="1177" width="7" height="7" fill="#a9c6f9"/><rect x="538" y="1177" width="7" height="7" fill="#98bbf8"/><rect x="545" y="1177" width="7" height="7" fill="#98bbf8"/><rect x="552" y="1177" width="7" height="7" fill="#98bbf8"/><rect x="559" y="1177" width="7" height="7" fill="#98bbf8"/><rect x="566" y="1177" width="7" height="7" fill="#a9c6f9"/><rect x="545" y="1184" width="7" height="7" fill="#dde8fd"/><rect x="489" y="1184" width="7" height="7" fill="#dde8fd"/></svg>
</body>
</html>
